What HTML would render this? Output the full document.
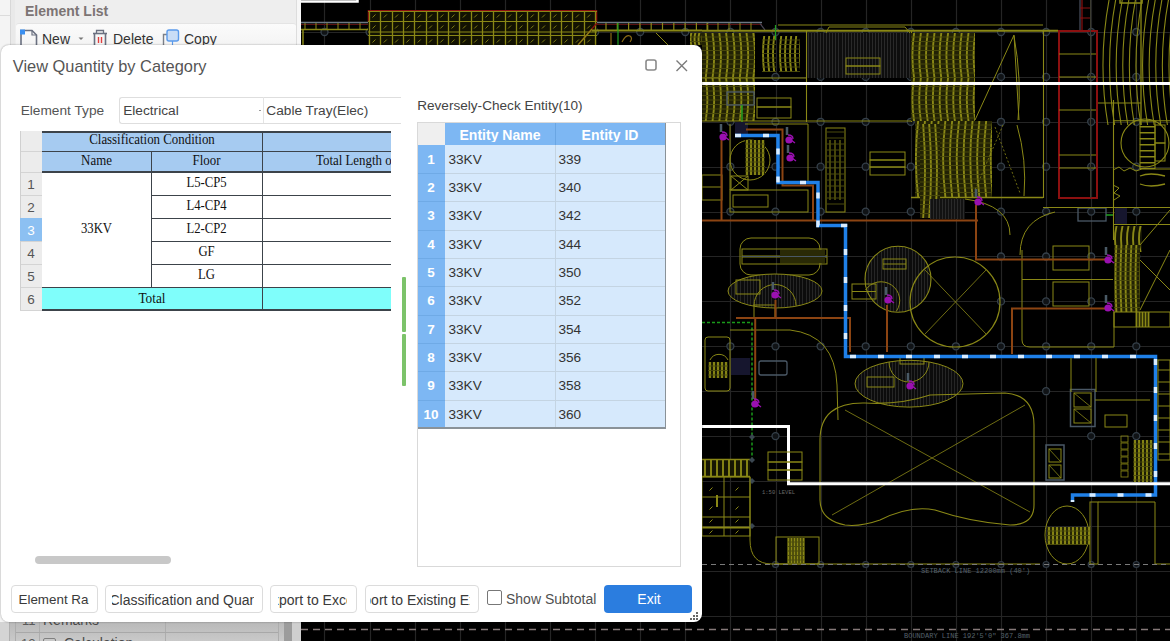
<!DOCTYPE html>
<html><head><meta charset="utf-8">
<style>
*{box-sizing:border-box;margin:0;padding:0}
html,body{width:1170px;height:641px;overflow:hidden;background:#000;font-family:"Liberation Sans",sans-serif}
.abs{position:absolute}
.t{position:absolute;white-space:nowrap}
</style></head><body>
<div class="abs" style="left:0px;top:0px;width:301px;height:641px;background:#e9e9e9"></div>
<div class="abs" style="left:0px;top:0px;width:11px;height:641px;background:#f4f4f4;border-right:1px solid #d8d8d8"></div>
<div class="abs" style="left:0px;top:15px;width:11px;height:1px;background:#dcdcdc"></div>
<div class="abs" style="left:15px;top:0px;width:282px;height:641px;background:#eeeeee;border-right:1px solid #dddddd"></div>
<div class="abs" style="left:16px;top:23px;width:280px;height:25px;background:linear-gradient(#fbfbfb,#f3f3f3);border-top:1px solid #e4e4e4;border-radius:3px 3px 0 0"></div>
<div class="t" style="left:25.0px;top:4.0px;font-size:14px;line-height:14px;color:#7c7474;font-weight:bold;font-family:'Liberation Sans',sans-serif;">Element List</div>
<svg class="abs" style="left:0;top:0" width="300" height="50" viewBox="0 0 300 50"><path d="M21 46 L21 30.5 L32 30.5 L36.5 35 L36.5 46" fill="none" stroke="#6a7080" stroke-width="1.6"/><path d="M32 30.5 L32 35 L36.5 35" fill="none" stroke="#6a7080" stroke-width="1.2"/><rect x="20" y="29.5" width="5" height="5" fill="#3b8ff0"/><path d="M78.5 37.5 L83.5 37.5 L81 40 Z" fill="#777"/><path d="M93 33.5 L107 33.5" stroke="#6a7080" stroke-width="1.6"/><path d="M96.5 33 L96.5 30.5 L103.5 30.5 L103.5 33" fill="none" stroke="#6a7080" stroke-width="1.3"/><path d="M94.5 34 L94.5 46 M105.5 34 L105.5 46" stroke="#6a7080" stroke-width="1.6"/><path d="M98.5 37 L98.5 43 M101.5 37 L101.5 43" stroke="#e04040" stroke-width="1.4"/><path d="M163.5 46 L163.5 34.5 L167 34.5" fill="none" stroke="#7a7f88" stroke-width="1.4"/><rect x="167" y="30" width="11.5" height="11" rx="2" fill="#c9ddf6" stroke="#5b9bec" stroke-width="1.4"/><path d="M172.5 41 L172.5 46" stroke="#5b9bec" stroke-width="1.2"/></svg>
<div class="t" style="left:42.0px;top:32.1px;font-size:14px;line-height:14px;color:#333;font-weight:normal;font-family:'Liberation Sans',sans-serif;">New</div>
<div class="t" style="left:113.0px;top:32.1px;font-size:14px;line-height:14px;color:#333;font-weight:normal;font-family:'Liberation Sans',sans-serif;">Delete</div>
<div class="t" style="left:184.0px;top:32.1px;font-size:14px;line-height:14px;color:#333;font-weight:normal;font-family:'Liberation Sans',sans-serif;">Copy</div>
<div class="abs" style="left:297px;top:0px;width:4px;height:641px;background:#f7f7f7"></div>
<div class="abs" style="left:0px;top:622px;width:301px;height:19px;background:linear-gradient(#b9b9b9,#c9c9c9)"></div>
<div class="abs" style="left:0px;top:622px;width:9px;height:19px;background:#d4d4d4"></div>
<div class="abs" style="left:9px;top:622px;width:1px;height:19px;background:#b0b0b0"></div>
<div class="abs" style="left:15px;top:622px;width:1px;height:19px;background:#adadad"></div>
<div class="abs" style="left:39px;top:622px;width:1px;height:19px;background:#adadad"></div>
<div class="abs" style="left:165px;top:622px;width:1px;height:19px;background:#adadad"></div>
<div class="abs" style="left:277.5px;top:622px;width:1.0px;height:19px;background:#adadad"></div>
<div class="abs" style="left:284px;top:622px;width:8px;height:19px;background:#9c9c9c"></div>
<div class="abs" style="left:292px;top:622px;width:9px;height:19px;background:#cfcfcf"></div>
<div class="abs" style="left:16px;top:631.5px;width:262px;height:1.0px;background:#a8a8a8"></div>
<div class="t" style="left:22.0px;top:614.0px;font-size:13px;line-height:13px;color:#5a5a5a;font-weight:normal;font-family:'Liberation Sans',sans-serif;">11</div>
<div class="t" style="left:43.0px;top:613.1px;font-size:14px;line-height:14px;color:#4a4a4a;font-weight:normal;font-family:'Liberation Sans',sans-serif;">Remarks</div>
<div class="t" style="left:21.0px;top:637.0px;font-size:13px;line-height:13px;color:#5a5a5a;font-weight:normal;font-family:'Liberation Sans',sans-serif;">12</div>
<div class="abs" style="left:43px;top:638px;width:13px;height:13px;border:1px solid #808080;border-radius:2px"></div>
<div class="t" style="left:64.0px;top:636.1px;font-size:14px;line-height:14px;color:#4a4a4a;font-weight:normal;font-family:'Liberation Sans',sans-serif;">Calculation</div>
<svg class="abs" style="left:301px;top:0" width="869" height="641" viewBox="301 0 869 641">
<rect x="301" y="0" width="869" height="641" fill="#000"/>
<line x1="324.5" y1="0" x2="324.5" y2="641" stroke="#252525" stroke-width="1.2" />
<line x1="370.5" y1="0" x2="370.5" y2="641" stroke="#252525" stroke-width="1.2" />
<line x1="415.5" y1="0" x2="415.5" y2="641" stroke="#252525" stroke-width="1.2" />
<line x1="460.5" y1="0" x2="460.5" y2="641" stroke="#252525" stroke-width="1.2" />
<line x1="505.5" y1="0" x2="505.5" y2="641" stroke="#252525" stroke-width="1.2" />
<line x1="550.5" y1="0" x2="550.5" y2="641" stroke="#252525" stroke-width="1.2" />
<line x1="595.5" y1="0" x2="595.5" y2="641" stroke="#252525" stroke-width="1.2" />
<line x1="640.5" y1="0" x2="640.5" y2="641" stroke="#252525" stroke-width="1.2" />
<line x1="685.5" y1="0" x2="685.5" y2="641" stroke="#252525" stroke-width="1.2" />
<line x1="730.5" y1="0" x2="730.5" y2="641" stroke="#252525" stroke-width="1.2" />
<line x1="776.5" y1="0" x2="776.5" y2="641" stroke="#252525" stroke-width="1.2" />
<line x1="821.5" y1="0" x2="821.5" y2="641" stroke="#252525" stroke-width="1.2" />
<line x1="866.5" y1="0" x2="866.5" y2="641" stroke="#252525" stroke-width="1.2" />
<line x1="911.5" y1="0" x2="911.5" y2="641" stroke="#252525" stroke-width="1.2" />
<line x1="956.5" y1="0" x2="956.5" y2="641" stroke="#252525" stroke-width="1.2" />
<line x1="1001.5" y1="0" x2="1001.5" y2="641" stroke="#252525" stroke-width="1.2" />
<line x1="1046.5" y1="0" x2="1046.5" y2="641" stroke="#252525" stroke-width="1.2" />
<line x1="1091.5" y1="0" x2="1091.5" y2="641" stroke="#252525" stroke-width="1.2" />
<line x1="1136.5" y1="0" x2="1136.5" y2="641" stroke="#252525" stroke-width="1.2" />
<line x1="301" y1="32.5" x2="1170" y2="32.5" stroke="#252525" stroke-width="1.2" />
<line x1="301" y1="77.5" x2="1170" y2="77.5" stroke="#252525" stroke-width="1.2" />
<line x1="301" y1="122.5" x2="1170" y2="122.5" stroke="#252525" stroke-width="1.2" />
<line x1="301" y1="167.5" x2="1170" y2="167.5" stroke="#252525" stroke-width="1.2" />
<line x1="301" y1="212.5" x2="1170" y2="212.5" stroke="#252525" stroke-width="1.2" />
<line x1="301" y1="256.5" x2="1170" y2="256.5" stroke="#252525" stroke-width="1.2" />
<line x1="301" y1="301.5" x2="1170" y2="301.5" stroke="#252525" stroke-width="1.2" />
<line x1="301" y1="346.5" x2="1170" y2="346.5" stroke="#252525" stroke-width="1.2" />
<line x1="301" y1="391.5" x2="1170" y2="391.5" stroke="#252525" stroke-width="1.2" />
<line x1="301" y1="436.5" x2="1170" y2="436.5" stroke="#252525" stroke-width="1.2" />
<line x1="301" y1="481.5" x2="1170" y2="481.5" stroke="#252525" stroke-width="1.2" />
<line x1="301" y1="526.5" x2="1170" y2="526.5" stroke="#252525" stroke-width="1.2" />
<line x1="301" y1="571.5" x2="1170" y2="571.5" stroke="#252525" stroke-width="1.2" />
<line x1="301" y1="616.5" x2="1170" y2="616.5" stroke="#252525" stroke-width="1.2" />
<circle cx="324.5" cy="32.0" r="3.5" stroke="#35404a" stroke-width="1.3" fill="#101316" />
<circle cx="369.6" cy="32.0" r="3.5" stroke="#35404a" stroke-width="1.3" fill="#101316" />
<circle cx="414.7" cy="32.0" r="3.5" stroke="#35404a" stroke-width="1.3" fill="#101316" />
<circle cx="459.8" cy="32.0" r="3.5" stroke="#35404a" stroke-width="1.3" fill="#101316" />
<circle cx="504.9" cy="32.0" r="3.5" stroke="#35404a" stroke-width="1.3" fill="#101316" />
<circle cx="550.0" cy="32.0" r="3.5" stroke="#35404a" stroke-width="1.3" fill="#101316" />
<circle cx="595.1" cy="32.0" r="3.5" stroke="#35404a" stroke-width="1.3" fill="#101316" />
<circle cx="640.2" cy="32.0" r="3.5" stroke="#35404a" stroke-width="1.3" fill="#101316" />
<circle cx="685.3" cy="32.0" r="3.5" stroke="#35404a" stroke-width="1.3" fill="#101316" />
<circle cx="730.4" cy="32.0" r="3.5" stroke="#35404a" stroke-width="1.3" fill="#101316" />
<circle cx="730.4" cy="76.9" r="3.5" stroke="#35404a" stroke-width="1.3" fill="#101316" />
<circle cx="730.4" cy="121.8" r="3.5" stroke="#35404a" stroke-width="1.3" fill="#101316" />
<circle cx="730.4" cy="166.7" r="3.5" stroke="#35404a" stroke-width="1.3" fill="#101316" />
<circle cx="730.4" cy="211.6" r="3.5" stroke="#35404a" stroke-width="1.3" fill="#101316" />
<circle cx="730.4" cy="346.3" r="3.5" stroke="#35404a" stroke-width="1.3" fill="#101316" />
<circle cx="775.5" cy="32.0" r="3.5" stroke="#35404a" stroke-width="1.3" fill="#101316" />
<circle cx="775.5" cy="76.9" r="3.5" stroke="#35404a" stroke-width="1.3" fill="#101316" />
<circle cx="775.5" cy="121.8" r="3.5" stroke="#35404a" stroke-width="1.3" fill="#101316" />
<circle cx="775.5" cy="166.7" r="3.5" stroke="#35404a" stroke-width="1.3" fill="#101316" />
<circle cx="775.5" cy="211.6" r="3.5" stroke="#35404a" stroke-width="1.3" fill="#101316" />
<circle cx="775.5" cy="346.3" r="3.5" stroke="#35404a" stroke-width="1.3" fill="#101316" />
<circle cx="775.5" cy="436.1" r="3.5" stroke="#35404a" stroke-width="1.3" fill="#101316" />
<circle cx="820.6" cy="32.0" r="3.5" stroke="#35404a" stroke-width="1.3" fill="#101316" />
<circle cx="820.6" cy="76.9" r="3.5" stroke="#35404a" stroke-width="1.3" fill="#101316" />
<circle cx="820.6" cy="121.8" r="3.5" stroke="#35404a" stroke-width="1.3" fill="#101316" />
<circle cx="820.6" cy="166.7" r="3.5" stroke="#35404a" stroke-width="1.3" fill="#101316" />
<circle cx="820.6" cy="211.6" r="3.5" stroke="#35404a" stroke-width="1.3" fill="#101316" />
<circle cx="820.6" cy="346.3" r="3.5" stroke="#35404a" stroke-width="1.3" fill="#101316" />
<circle cx="865.7" cy="32.0" r="3.5" stroke="#35404a" stroke-width="1.3" fill="#101316" />
<circle cx="865.7" cy="76.9" r="3.5" stroke="#35404a" stroke-width="1.3" fill="#101316" />
<circle cx="865.7" cy="121.8" r="3.5" stroke="#35404a" stroke-width="1.3" fill="#101316" />
<circle cx="865.7" cy="166.7" r="3.5" stroke="#35404a" stroke-width="1.3" fill="#101316" />
<circle cx="865.7" cy="211.6" r="3.5" stroke="#35404a" stroke-width="1.3" fill="#101316" />
<circle cx="865.7" cy="346.3" r="3.5" stroke="#35404a" stroke-width="1.3" fill="#101316" />
<circle cx="910.8" cy="32.0" r="3.5" stroke="#35404a" stroke-width="1.3" fill="#101316" />
<circle cx="910.8" cy="76.9" r="3.5" stroke="#35404a" stroke-width="1.3" fill="#101316" />
<circle cx="910.8" cy="121.8" r="3.5" stroke="#35404a" stroke-width="1.3" fill="#101316" />
<circle cx="910.8" cy="166.7" r="3.5" stroke="#35404a" stroke-width="1.3" fill="#101316" />
<circle cx="910.8" cy="211.6" r="3.5" stroke="#35404a" stroke-width="1.3" fill="#101316" />
<circle cx="910.8" cy="346.3" r="3.5" stroke="#35404a" stroke-width="1.3" fill="#101316" />
<circle cx="955.9" cy="32.0" r="3.5" stroke="#35404a" stroke-width="1.3" fill="#101316" />
<circle cx="955.9" cy="76.9" r="3.5" stroke="#35404a" stroke-width="1.3" fill="#101316" />
<circle cx="955.9" cy="121.8" r="3.5" stroke="#35404a" stroke-width="1.3" fill="#101316" />
<circle cx="955.9" cy="166.7" r="3.5" stroke="#35404a" stroke-width="1.3" fill="#101316" />
<circle cx="955.9" cy="211.6" r="3.5" stroke="#35404a" stroke-width="1.3" fill="#101316" />
<circle cx="955.9" cy="346.3" r="3.5" stroke="#35404a" stroke-width="1.3" fill="#101316" />
<circle cx="1001.0" cy="32.0" r="3.5" stroke="#35404a" stroke-width="1.3" fill="#101316" />
<circle cx="1001.0" cy="76.9" r="3.5" stroke="#35404a" stroke-width="1.3" fill="#101316" />
<circle cx="1001.0" cy="121.8" r="3.5" stroke="#35404a" stroke-width="1.3" fill="#101316" />
<circle cx="1001.0" cy="166.7" r="3.5" stroke="#35404a" stroke-width="1.3" fill="#101316" />
<circle cx="1001.0" cy="211.6" r="3.5" stroke="#35404a" stroke-width="1.3" fill="#101316" />
<circle cx="1001.0" cy="256.5" r="3.5" stroke="#35404a" stroke-width="1.3" fill="#101316" />
<circle cx="1001.0" cy="301.4" r="3.5" stroke="#35404a" stroke-width="1.3" fill="#101316" />
<circle cx="1001.0" cy="346.3" r="3.5" stroke="#35404a" stroke-width="1.3" fill="#101316" />
<circle cx="1046.1" cy="32.0" r="3.5" stroke="#35404a" stroke-width="1.3" fill="#101316" />
<circle cx="1046.1" cy="76.9" r="3.5" stroke="#35404a" stroke-width="1.3" fill="#101316" />
<circle cx="1046.1" cy="121.8" r="3.5" stroke="#35404a" stroke-width="1.3" fill="#101316" />
<circle cx="1046.1" cy="166.7" r="3.5" stroke="#35404a" stroke-width="1.3" fill="#101316" />
<circle cx="1046.1" cy="211.6" r="3.5" stroke="#35404a" stroke-width="1.3" fill="#101316" />
<circle cx="1046.1" cy="256.5" r="3.5" stroke="#35404a" stroke-width="1.3" fill="#101316" />
<circle cx="1046.1" cy="301.4" r="3.5" stroke="#35404a" stroke-width="1.3" fill="#101316" />
<circle cx="1046.1" cy="346.3" r="3.5" stroke="#35404a" stroke-width="1.3" fill="#101316" />
<circle cx="1046.1" cy="391.2" r="3.5" stroke="#35404a" stroke-width="1.3" fill="#101316" />
<circle cx="1091.2" cy="32.0" r="3.5" stroke="#35404a" stroke-width="1.3" fill="#101316" />
<circle cx="1091.2" cy="76.9" r="3.5" stroke="#35404a" stroke-width="1.3" fill="#101316" />
<circle cx="1091.2" cy="121.8" r="3.5" stroke="#35404a" stroke-width="1.3" fill="#101316" />
<circle cx="1091.2" cy="166.7" r="3.5" stroke="#35404a" stroke-width="1.3" fill="#101316" />
<circle cx="1091.2" cy="211.6" r="3.5" stroke="#35404a" stroke-width="1.3" fill="#101316" />
<circle cx="1091.2" cy="256.5" r="3.5" stroke="#35404a" stroke-width="1.3" fill="#101316" />
<circle cx="1091.2" cy="301.4" r="3.5" stroke="#35404a" stroke-width="1.3" fill="#101316" />
<circle cx="1091.2" cy="346.3" r="3.5" stroke="#35404a" stroke-width="1.3" fill="#101316" />
<circle cx="1091.2" cy="436.1" r="3.5" stroke="#35404a" stroke-width="1.3" fill="#101316" />
<circle cx="1136.3" cy="32.0" r="3.5" stroke="#35404a" stroke-width="1.3" fill="#101316" />
<circle cx="1136.3" cy="76.9" r="3.5" stroke="#35404a" stroke-width="1.3" fill="#101316" />
<circle cx="1136.3" cy="121.8" r="3.5" stroke="#35404a" stroke-width="1.3" fill="#101316" />
<circle cx="1136.3" cy="166.7" r="3.5" stroke="#35404a" stroke-width="1.3" fill="#101316" />
<circle cx="1136.3" cy="211.6" r="3.5" stroke="#35404a" stroke-width="1.3" fill="#101316" />
<circle cx="1136.3" cy="256.5" r="3.5" stroke="#35404a" stroke-width="1.3" fill="#101316" />
<circle cx="1136.3" cy="301.4" r="3.5" stroke="#35404a" stroke-width="1.3" fill="#101316" />
<circle cx="1136.3" cy="346.3" r="3.5" stroke="#35404a" stroke-width="1.3" fill="#101316" />
<circle cx="1136.3" cy="436.1" r="3.5" stroke="#35404a" stroke-width="1.3" fill="#101316" />
<circle cx="775.5" cy="564.5" r="3" stroke="#323c46" stroke-width="1.2" fill="#111418" />
<circle cx="820.6" cy="564.5" r="3" stroke="#323c46" stroke-width="1.2" fill="#111418" />
<circle cx="865.7" cy="564.5" r="3" stroke="#323c46" stroke-width="1.2" fill="#111418" />
<circle cx="910.8" cy="564.5" r="3" stroke="#323c46" stroke-width="1.2" fill="#111418" />
<circle cx="955.9" cy="564.5" r="3" stroke="#323c46" stroke-width="1.2" fill="#111418" />
<circle cx="1001.0" cy="564.5" r="3" stroke="#323c46" stroke-width="1.2" fill="#111418" />
<circle cx="1046.1" cy="564.5" r="3" stroke="#323c46" stroke-width="1.2" fill="#111418" />
<circle cx="1091.2" cy="564.5" r="3" stroke="#323c46" stroke-width="1.2" fill="#111418" />
<circle cx="1136.3" cy="564.5" r="3" stroke="#323c46" stroke-width="1.2" fill="#111418" />
<path d="M301 1.5 L357.5 1.5 L357.5 -2" stroke="#ffffff" stroke-width="2.5" fill="none" />
<line x1="301" y1="22.5" x2="378" y2="22.5" stroke="#6c7884" stroke-width="1.6" />
<line x1="301" y1="24.5" x2="378" y2="24.5" stroke="#5a1010" stroke-width="1" />
<line x1="301" y1="29.5" x2="378" y2="29.5" stroke="#8a8816" stroke-width="1.5" />
<line x1="305" y1="23" x2="305" y2="30" stroke="#8a8816" stroke-width="1" />
<line x1="316" y1="23" x2="316" y2="30" stroke="#8a8816" stroke-width="1" />
<line x1="327" y1="23" x2="327" y2="30" stroke="#8a8816" stroke-width="1" />
<line x1="338" y1="23" x2="338" y2="30" stroke="#8a8816" stroke-width="1" />
<line x1="349" y1="23" x2="349" y2="30" stroke="#8a8816" stroke-width="1" />
<line x1="360" y1="23" x2="360" y2="30" stroke="#8a8816" stroke-width="1" />
<line x1="371" y1="23" x2="371" y2="30" stroke="#8a8816" stroke-width="1" />
<path d="M378 23.5 L392 45" stroke="#8c1010" stroke-width="1.5" fill="none" />
<path d="M376 29.5 L388 45" stroke="#8a8816" stroke-width="1.2" fill="none" />
<line x1="303" y1="29" x2="303" y2="45" stroke="#8a8816" stroke-width="1.5" />
<rect x="368" y="10" width="229" height="36" fill="#121202"/>
<line x1="368" y1="10.5" x2="597" y2="10.5" stroke="#8c1010" stroke-width="1" />
<line x1="368.5" y1="10" x2="368.5" y2="22" stroke="#8c1010" stroke-width="1.5" />
<line x1="596.5" y1="10" x2="596.5" y2="22" stroke="#8c1010" stroke-width="1.5" />
<line x1="369.5" y1="11" x2="369.5" y2="45" stroke="#8a8816" stroke-width="1.3" />
<line x1="380.5" y1="11" x2="380.5" y2="45" stroke="#8a8816" stroke-width="1.3" />
<line x1="392.5" y1="11" x2="392.5" y2="45" stroke="#8a8816" stroke-width="1.3" />
<line x1="403.5" y1="11" x2="403.5" y2="45" stroke="#8a8816" stroke-width="1.3" />
<line x1="414.5" y1="11" x2="414.5" y2="45" stroke="#8a8816" stroke-width="1.3" />
<line x1="426.5" y1="11" x2="426.5" y2="45" stroke="#8a8816" stroke-width="1.3" />
<line x1="437.5" y1="11" x2="437.5" y2="45" stroke="#8a8816" stroke-width="1.3" />
<line x1="448.5" y1="11" x2="448.5" y2="45" stroke="#8a8816" stroke-width="1.3" />
<line x1="459.5" y1="11" x2="459.5" y2="45" stroke="#8a8816" stroke-width="1.3" />
<line x1="471.5" y1="11" x2="471.5" y2="45" stroke="#8a8816" stroke-width="1.3" />
<line x1="482.5" y1="11" x2="482.5" y2="45" stroke="#8a8816" stroke-width="1.3" />
<line x1="493.5" y1="11" x2="493.5" y2="45" stroke="#8a8816" stroke-width="1.3" />
<line x1="505.5" y1="11" x2="505.5" y2="45" stroke="#8a8816" stroke-width="1.3" />
<line x1="516.5" y1="11" x2="516.5" y2="45" stroke="#8a8816" stroke-width="1.3" />
<line x1="527.5" y1="11" x2="527.5" y2="45" stroke="#8a8816" stroke-width="1.3" />
<line x1="538.5" y1="11" x2="538.5" y2="45" stroke="#8a8816" stroke-width="1.3" />
<line x1="550.5" y1="11" x2="550.5" y2="45" stroke="#8a8816" stroke-width="1.3" />
<line x1="561.5" y1="11" x2="561.5" y2="45" stroke="#8a8816" stroke-width="1.3" />
<line x1="572.5" y1="11" x2="572.5" y2="45" stroke="#8a8816" stroke-width="1.3" />
<line x1="584.5" y1="11" x2="584.5" y2="45" stroke="#8a8816" stroke-width="1.3" />
<line x1="595.5" y1="11" x2="595.5" y2="45" stroke="#8a8816" stroke-width="1.3" />
<line x1="368" y1="11.5" x2="597" y2="11.5" stroke="#8a8816" stroke-width="1.1" />
<line x1="368" y1="21.5" x2="597" y2="21.5" stroke="#8a8816" stroke-width="1.1" />
<line x1="368" y1="32" x2="597" y2="32" stroke="#8a8816" stroke-width="1.1" />
<line x1="368" y1="35.5" x2="597" y2="35.5" stroke="#8a8816" stroke-width="1.1" />
<line x1="372.5" y1="17.5" x2="375.5" y2="14.5" stroke="#8a8816" stroke-width="0.9" />
<line x1="372.5" y1="28.5" x2="375.5" y2="25.5" stroke="#8a8816" stroke-width="0.9" />
<line x1="372.5" y1="42.5" x2="375.5" y2="39.5" stroke="#8a8816" stroke-width="0.9" />
<line x1="383.8" y1="17.5" x2="386.8" y2="14.5" stroke="#8a8816" stroke-width="0.9" />
<line x1="383.8" y1="28.5" x2="386.8" y2="25.5" stroke="#8a8816" stroke-width="0.9" />
<line x1="383.8" y1="42.5" x2="386.8" y2="39.5" stroke="#8a8816" stroke-width="0.9" />
<line x1="395.1" y1="17.5" x2="398.1" y2="14.5" stroke="#8a8816" stroke-width="0.9" />
<line x1="395.1" y1="28.5" x2="398.1" y2="25.5" stroke="#8a8816" stroke-width="0.9" />
<line x1="395.1" y1="42.5" x2="398.1" y2="39.5" stroke="#8a8816" stroke-width="0.9" />
<line x1="406.4" y1="17.5" x2="409.4" y2="14.5" stroke="#8a8816" stroke-width="0.9" />
<line x1="406.4" y1="28.5" x2="409.4" y2="25.5" stroke="#8a8816" stroke-width="0.9" />
<line x1="406.4" y1="42.5" x2="409.4" y2="39.5" stroke="#8a8816" stroke-width="0.9" />
<line x1="417.7" y1="17.5" x2="420.7" y2="14.5" stroke="#8a8816" stroke-width="0.9" />
<line x1="417.7" y1="28.5" x2="420.7" y2="25.5" stroke="#8a8816" stroke-width="0.9" />
<line x1="417.7" y1="42.5" x2="420.7" y2="39.5" stroke="#8a8816" stroke-width="0.9" />
<line x1="429.0" y1="17.5" x2="432.0" y2="14.5" stroke="#8a8816" stroke-width="0.9" />
<line x1="429.0" y1="28.5" x2="432.0" y2="25.5" stroke="#8a8816" stroke-width="0.9" />
<line x1="429.0" y1="42.5" x2="432.0" y2="39.5" stroke="#8a8816" stroke-width="0.9" />
<line x1="440.3" y1="17.5" x2="443.3" y2="14.5" stroke="#8a8816" stroke-width="0.9" />
<line x1="440.3" y1="28.5" x2="443.3" y2="25.5" stroke="#8a8816" stroke-width="0.9" />
<line x1="440.3" y1="42.5" x2="443.3" y2="39.5" stroke="#8a8816" stroke-width="0.9" />
<line x1="451.6" y1="17.5" x2="454.6" y2="14.5" stroke="#8a8816" stroke-width="0.9" />
<line x1="451.6" y1="28.5" x2="454.6" y2="25.5" stroke="#8a8816" stroke-width="0.9" />
<line x1="451.6" y1="42.5" x2="454.6" y2="39.5" stroke="#8a8816" stroke-width="0.9" />
<line x1="462.9" y1="17.5" x2="465.9" y2="14.5" stroke="#8a8816" stroke-width="0.9" />
<line x1="462.9" y1="28.5" x2="465.9" y2="25.5" stroke="#8a8816" stroke-width="0.9" />
<line x1="462.9" y1="42.5" x2="465.9" y2="39.5" stroke="#8a8816" stroke-width="0.9" />
<line x1="474.2" y1="17.5" x2="477.2" y2="14.5" stroke="#8a8816" stroke-width="0.9" />
<line x1="474.2" y1="28.5" x2="477.2" y2="25.5" stroke="#8a8816" stroke-width="0.9" />
<line x1="474.2" y1="42.5" x2="477.2" y2="39.5" stroke="#8a8816" stroke-width="0.9" />
<line x1="485.5" y1="17.5" x2="488.5" y2="14.5" stroke="#8a8816" stroke-width="0.9" />
<line x1="485.5" y1="28.5" x2="488.5" y2="25.5" stroke="#8a8816" stroke-width="0.9" />
<line x1="485.5" y1="42.5" x2="488.5" y2="39.5" stroke="#8a8816" stroke-width="0.9" />
<line x1="496.8" y1="17.5" x2="499.8" y2="14.5" stroke="#8a8816" stroke-width="0.9" />
<line x1="496.8" y1="28.5" x2="499.8" y2="25.5" stroke="#8a8816" stroke-width="0.9" />
<line x1="496.8" y1="42.5" x2="499.8" y2="39.5" stroke="#8a8816" stroke-width="0.9" />
<line x1="508.1" y1="17.5" x2="511.1" y2="14.5" stroke="#8a8816" stroke-width="0.9" />
<line x1="508.1" y1="28.5" x2="511.1" y2="25.5" stroke="#8a8816" stroke-width="0.9" />
<line x1="508.1" y1="42.5" x2="511.1" y2="39.5" stroke="#8a8816" stroke-width="0.9" />
<line x1="519.4" y1="17.5" x2="522.4" y2="14.5" stroke="#8a8816" stroke-width="0.9" />
<line x1="519.4" y1="28.5" x2="522.4" y2="25.5" stroke="#8a8816" stroke-width="0.9" />
<line x1="519.4" y1="42.5" x2="522.4" y2="39.5" stroke="#8a8816" stroke-width="0.9" />
<line x1="530.7" y1="17.5" x2="533.7" y2="14.5" stroke="#8a8816" stroke-width="0.9" />
<line x1="530.7" y1="28.5" x2="533.7" y2="25.5" stroke="#8a8816" stroke-width="0.9" />
<line x1="530.7" y1="42.5" x2="533.7" y2="39.5" stroke="#8a8816" stroke-width="0.9" />
<line x1="542.0" y1="17.5" x2="545.0" y2="14.5" stroke="#8a8816" stroke-width="0.9" />
<line x1="542.0" y1="28.5" x2="545.0" y2="25.5" stroke="#8a8816" stroke-width="0.9" />
<line x1="542.0" y1="42.5" x2="545.0" y2="39.5" stroke="#8a8816" stroke-width="0.9" />
<line x1="553.3" y1="17.5" x2="556.3" y2="14.5" stroke="#8a8816" stroke-width="0.9" />
<line x1="553.3" y1="28.5" x2="556.3" y2="25.5" stroke="#8a8816" stroke-width="0.9" />
<line x1="553.3" y1="42.5" x2="556.3" y2="39.5" stroke="#8a8816" stroke-width="0.9" />
<line x1="564.6" y1="17.5" x2="567.6" y2="14.5" stroke="#8a8816" stroke-width="0.9" />
<line x1="564.6" y1="28.5" x2="567.6" y2="25.5" stroke="#8a8816" stroke-width="0.9" />
<line x1="564.6" y1="42.5" x2="567.6" y2="39.5" stroke="#8a8816" stroke-width="0.9" />
<line x1="575.9" y1="17.5" x2="578.9" y2="14.5" stroke="#8a8816" stroke-width="0.9" />
<line x1="575.9" y1="28.5" x2="578.9" y2="25.5" stroke="#8a8816" stroke-width="0.9" />
<line x1="575.9" y1="42.5" x2="578.9" y2="39.5" stroke="#8a8816" stroke-width="0.9" />
<line x1="587.2" y1="17.5" x2="590.2" y2="14.5" stroke="#8a8816" stroke-width="0.9" />
<line x1="587.2" y1="28.5" x2="590.2" y2="25.5" stroke="#8a8816" stroke-width="0.9" />
<line x1="587.2" y1="42.5" x2="590.2" y2="39.5" stroke="#8a8816" stroke-width="0.9" />
<line x1="597" y1="22.5" x2="702" y2="22.5" stroke="#6c7884" stroke-width="1.6" />
<line x1="597" y1="24.5" x2="702" y2="24.5" stroke="#5a1010" stroke-width="1" />
<line x1="592" y1="30.5" x2="702" y2="30.5" stroke="#8a8816" stroke-width="2.2" />
<line x1="606.0" y1="23" x2="606.0" y2="31" stroke="#8a8816" stroke-width="1.2" />
<line x1="617.3" y1="23" x2="617.3" y2="31" stroke="#8a8816" stroke-width="1.2" />
<line x1="628.6" y1="23" x2="628.6" y2="31" stroke="#8a8816" stroke-width="1.2" />
<line x1="639.9" y1="23" x2="639.9" y2="31" stroke="#8a8816" stroke-width="1.2" />
<line x1="651.2" y1="23" x2="651.2" y2="31" stroke="#8a8816" stroke-width="1.2" />
<line x1="662.5" y1="23" x2="662.5" y2="31" stroke="#8a8816" stroke-width="1.2" />
<line x1="673.8" y1="23" x2="673.8" y2="31" stroke="#8a8816" stroke-width="1.2" />
<line x1="685.1" y1="23" x2="685.1" y2="31" stroke="#8a8816" stroke-width="1.2" />
<line x1="696.4" y1="23" x2="696.4" y2="31" stroke="#8a8816" stroke-width="1.2" />
<line x1="707.7" y1="23" x2="707.7" y2="31" stroke="#8a8816" stroke-width="1.2" />
<path d="M597 23 L578 45" stroke="#8c1010" stroke-width="1.2" fill="none" />
<path d="M592 29 L578 45" stroke="#8a8816" stroke-width="1.2" fill="none" />
<line x1="618" y1="23" x2="618" y2="45" stroke="#20a020" stroke-width="1.2" />
<path d="M622 42 q4 -8 8 -6 q3 2 0 6 M611 33 L611 45" stroke="#8a6a16" stroke-width="1.2" fill="none" />
<path d="M656 33 L668 45" stroke="#8a8816" stroke-width="1" fill="none" />
<clipPath id="c1"><rect x="690" y="33" width="12" height="12"/></clipPath><g clip-path="url(#c1)">
<rect x="690" y="33" width="12" height="12" fill="#222205"/>
<path d="M692.0 31 Q689.0 39.0 692.0 47" stroke="#8a8816" stroke-width="1.9" fill="none" />
<path d="M696.0 31 Q693.0 39.0 696.0 47" stroke="#8a8816" stroke-width="1.9" fill="none" />
<path d="M700.0 31 Q697.0 39.0 700.0 47" stroke="#8a8816" stroke-width="1.9" fill="none" />
<path d="M704.0 31 Q701.0 39.0 704.0 47" stroke="#8a8816" stroke-width="1.9" fill="none" />
<line x1="690" y1="37" x2="702" y2="37" stroke="#4c4c0c" stroke-width="0.9" />
<line x1="690" y1="41.5" x2="702" y2="41.5" stroke="#4c4c0c" stroke-width="0.9" />
</g>
<line x1="702" y1="22.5" x2="762" y2="22.5" stroke="#6c7884" stroke-width="1.6" />
<line x1="702" y1="24.5" x2="762" y2="24.5" stroke="#5a1010" stroke-width="1" />
<line x1="707" y1="23" x2="707" y2="30" stroke="#8a8816" stroke-width="1" />
<line x1="718" y1="23" x2="718" y2="30" stroke="#8a8816" stroke-width="1" />
<line x1="729" y1="23" x2="729" y2="30" stroke="#8a8816" stroke-width="1" />
<line x1="740" y1="23" x2="740" y2="30" stroke="#8a8816" stroke-width="1" />
<line x1="751" y1="23" x2="751" y2="30" stroke="#8a8816" stroke-width="1" />
<path d="M760 23.5 L765 30" stroke="#4a4858" stroke-width="1.2" fill="none" />
<line x1="702" y1="30.8" x2="1058" y2="30.8" stroke="#8a8816" stroke-width="2" />
<line x1="778" y1="25" x2="1043" y2="25" stroke="#8a8816" stroke-width="1" />
<clipPath id="c2"><rect x="702" y="33" width="53" height="45"/></clipPath><g clip-path="url(#c2)">
<rect x="702" y="33" width="53" height="45" fill="#222205"/>
<path d="M705.4 31 Q709.4 55.5 705.4 80" stroke="#8a8816" stroke-width="1.9" fill="none" />
<path d="M712.2 31 Q716.2 55.5 712.2 80" stroke="#8a8816" stroke-width="1.9" fill="none" />
<path d="M719.0 31 Q723.0 55.5 719.0 80" stroke="#8a8816" stroke-width="1.9" fill="none" />
<path d="M725.8 31 Q729.8 55.5 725.8 80" stroke="#8a8816" stroke-width="1.9" fill="none" />
<path d="M732.6 31 Q736.6 55.5 732.6 80" stroke="#8a8816" stroke-width="1.9" fill="none" />
<path d="M739.4 31 Q743.4 55.5 739.4 80" stroke="#8a8816" stroke-width="1.9" fill="none" />
<path d="M746.2 31 Q750.2 55.5 746.2 80" stroke="#8a8816" stroke-width="1.9" fill="none" />
<path d="M753.0 31 Q757.0 55.5 753.0 80" stroke="#8a8816" stroke-width="1.9" fill="none" />
<path d="M759.8 31 Q763.8 55.5 759.8 80" stroke="#8a8816" stroke-width="1.9" fill="none" />
<line x1="702" y1="37" x2="755" y2="37" stroke="#4c4c0c" stroke-width="0.9" />
<line x1="702" y1="41.5" x2="755" y2="41.5" stroke="#4c4c0c" stroke-width="0.9" />
<line x1="702" y1="46.0" x2="755" y2="46.0" stroke="#4c4c0c" stroke-width="0.9" />
<line x1="702" y1="50.5" x2="755" y2="50.5" stroke="#4c4c0c" stroke-width="0.9" />
<line x1="702" y1="55.0" x2="755" y2="55.0" stroke="#4c4c0c" stroke-width="0.9" />
<line x1="702" y1="59.5" x2="755" y2="59.5" stroke="#4c4c0c" stroke-width="0.9" />
<line x1="702" y1="64.0" x2="755" y2="64.0" stroke="#4c4c0c" stroke-width="0.9" />
<line x1="702" y1="68.5" x2="755" y2="68.5" stroke="#4c4c0c" stroke-width="0.9" />
<line x1="702" y1="73.0" x2="755" y2="73.0" stroke="#4c4c0c" stroke-width="0.9" />
<line x1="702" y1="77.5" x2="755" y2="77.5" stroke="#4c4c0c" stroke-width="0.9" />
</g>
<clipPath id="c3"><rect x="702" y="78" width="53" height="43"/></clipPath><g clip-path="url(#c3)">
<rect x="702" y="78" width="53" height="43" fill="#222205"/>
<path d="M705.4 76 Q709.4 99.5 705.4 123" stroke="#8a8816" stroke-width="1.9" fill="none" />
<path d="M712.2 76 Q716.2 99.5 712.2 123" stroke="#8a8816" stroke-width="1.9" fill="none" />
<path d="M719.0 76 Q723.0 99.5 719.0 123" stroke="#8a8816" stroke-width="1.9" fill="none" />
<path d="M725.8 76 Q729.8 99.5 725.8 123" stroke="#8a8816" stroke-width="1.9" fill="none" />
<path d="M732.6 76 Q736.6 99.5 732.6 123" stroke="#8a8816" stroke-width="1.9" fill="none" />
<path d="M739.4 76 Q743.4 99.5 739.4 123" stroke="#8a8816" stroke-width="1.9" fill="none" />
<path d="M746.2 76 Q750.2 99.5 746.2 123" stroke="#8a8816" stroke-width="1.9" fill="none" />
<path d="M753.0 76 Q757.0 99.5 753.0 123" stroke="#8a8816" stroke-width="1.9" fill="none" />
<path d="M759.8 76 Q763.8 99.5 759.8 123" stroke="#8a8816" stroke-width="1.9" fill="none" />
<line x1="702" y1="82" x2="755" y2="82" stroke="#4c4c0c" stroke-width="0.9" />
<line x1="702" y1="86.5" x2="755" y2="86.5" stroke="#4c4c0c" stroke-width="0.9" />
<line x1="702" y1="91.0" x2="755" y2="91.0" stroke="#4c4c0c" stroke-width="0.9" />
<line x1="702" y1="95.5" x2="755" y2="95.5" stroke="#4c4c0c" stroke-width="0.9" />
<line x1="702" y1="100.0" x2="755" y2="100.0" stroke="#4c4c0c" stroke-width="0.9" />
<line x1="702" y1="104.5" x2="755" y2="104.5" stroke="#4c4c0c" stroke-width="0.9" />
<line x1="702" y1="109.0" x2="755" y2="109.0" stroke="#4c4c0c" stroke-width="0.9" />
<line x1="702" y1="113.5" x2="755" y2="113.5" stroke="#4c4c0c" stroke-width="0.9" />
<line x1="702" y1="118.0" x2="755" y2="118.0" stroke="#4c4c0c" stroke-width="0.9" />
</g>
<clipPath id="c4"><rect x="762" y="36" width="14" height="36"/></clipPath><g clip-path="url(#c4)">
<path d="M764.5 34 Q761.5 54.0 764.5 74" stroke="#8a8816" stroke-width="1.9" fill="none" />
<path d="M769.5 34 Q766.5 54.0 769.5 74" stroke="#8a8816" stroke-width="1.9" fill="none" />
<path d="M774.5 34 Q771.5 54.0 774.5 74" stroke="#8a8816" stroke-width="1.9" fill="none" />
<path d="M779.5 34 Q776.5 54.0 779.5 74" stroke="#8a8816" stroke-width="1.9" fill="none" />
<line x1="762" y1="40" x2="776" y2="40" stroke="#4c4c0c" stroke-width="0.9" />
<line x1="762" y1="44.5" x2="776" y2="44.5" stroke="#4c4c0c" stroke-width="0.9" />
<line x1="762" y1="49.0" x2="776" y2="49.0" stroke="#4c4c0c" stroke-width="0.9" />
<line x1="762" y1="53.5" x2="776" y2="53.5" stroke="#4c4c0c" stroke-width="0.9" />
<line x1="762" y1="58.0" x2="776" y2="58.0" stroke="#4c4c0c" stroke-width="0.9" />
<line x1="762" y1="62.5" x2="776" y2="62.5" stroke="#4c4c0c" stroke-width="0.9" />
<line x1="762" y1="67.0" x2="776" y2="67.0" stroke="#4c4c0c" stroke-width="0.9" />
<line x1="762" y1="71.5" x2="776" y2="71.5" stroke="#4c4c0c" stroke-width="0.9" />
</g>
<clipPath id="c5"><rect x="779" y="36" width="21" height="36"/></clipPath><g clip-path="url(#c5)">
<path d="M781.5 34 Q778.5 54.0 781.5 74" stroke="#8a8816" stroke-width="1.9" fill="none" />
<path d="M786.5 34 Q783.5 54.0 786.5 74" stroke="#8a8816" stroke-width="1.9" fill="none" />
<path d="M791.5 34 Q788.5 54.0 791.5 74" stroke="#8a8816" stroke-width="1.9" fill="none" />
<path d="M796.5 34 Q793.5 54.0 796.5 74" stroke="#8a8816" stroke-width="1.9" fill="none" />
<path d="M801.5 34 Q798.5 54.0 801.5 74" stroke="#8a8816" stroke-width="1.9" fill="none" />
<line x1="779" y1="40" x2="800" y2="40" stroke="#4c4c0c" stroke-width="0.9" />
<line x1="779" y1="44.5" x2="800" y2="44.5" stroke="#4c4c0c" stroke-width="0.9" />
<line x1="779" y1="49.0" x2="800" y2="49.0" stroke="#4c4c0c" stroke-width="0.9" />
<line x1="779" y1="53.5" x2="800" y2="53.5" stroke="#4c4c0c" stroke-width="0.9" />
<line x1="779" y1="58.0" x2="800" y2="58.0" stroke="#4c4c0c" stroke-width="0.9" />
<line x1="779" y1="62.5" x2="800" y2="62.5" stroke="#4c4c0c" stroke-width="0.9" />
<line x1="779" y1="67.0" x2="800" y2="67.0" stroke="#4c4c0c" stroke-width="0.9" />
<line x1="779" y1="71.5" x2="800" y2="71.5" stroke="#4c4c0c" stroke-width="0.9" />
</g>
<line x1="775.5" y1="25" x2="775.5" y2="40" stroke="#20a020" stroke-width="1.2" />
<rect x="807" y="33" width="104" height="45" fill="#0e0e0e"/>
<line x1="808.5" y1="33" x2="808.5" y2="78" stroke="#2a2a2a" stroke-width="1" />
<line x1="811.5" y1="33" x2="811.5" y2="78" stroke="#2a2a2a" stroke-width="1" />
<line x1="814.5" y1="33" x2="814.5" y2="78" stroke="#2a2a2a" stroke-width="1" />
<line x1="817.5" y1="33" x2="817.5" y2="78" stroke="#2a2a2a" stroke-width="1" />
<line x1="820.5" y1="33" x2="820.5" y2="78" stroke="#2a2a2a" stroke-width="1" />
<line x1="823.5" y1="33" x2="823.5" y2="78" stroke="#2a2a2a" stroke-width="1" />
<line x1="826.5" y1="33" x2="826.5" y2="78" stroke="#2a2a2a" stroke-width="1" />
<line x1="829.5" y1="33" x2="829.5" y2="78" stroke="#2a2a2a" stroke-width="1" />
<line x1="832.5" y1="33" x2="832.5" y2="78" stroke="#2a2a2a" stroke-width="1" />
<line x1="835.5" y1="33" x2="835.5" y2="78" stroke="#2a2a2a" stroke-width="1" />
<line x1="838.5" y1="33" x2="838.5" y2="78" stroke="#2a2a2a" stroke-width="1" />
<line x1="842.5" y1="33" x2="842.5" y2="78" stroke="#2a2a2a" stroke-width="1" />
<line x1="845.5" y1="33" x2="845.5" y2="78" stroke="#2a2a2a" stroke-width="1" />
<line x1="848.5" y1="33" x2="848.5" y2="78" stroke="#2a2a2a" stroke-width="1" />
<line x1="851.5" y1="33" x2="851.5" y2="78" stroke="#2a2a2a" stroke-width="1" />
<line x1="854.5" y1="33" x2="854.5" y2="78" stroke="#2a2a2a" stroke-width="1" />
<line x1="857.5" y1="33" x2="857.5" y2="78" stroke="#2a2a2a" stroke-width="1" />
<line x1="860.5" y1="33" x2="860.5" y2="78" stroke="#2a2a2a" stroke-width="1" />
<line x1="863.5" y1="33" x2="863.5" y2="78" stroke="#2a2a2a" stroke-width="1" />
<line x1="866.5" y1="33" x2="866.5" y2="78" stroke="#2a2a2a" stroke-width="1" />
<line x1="869.5" y1="33" x2="869.5" y2="78" stroke="#2a2a2a" stroke-width="1" />
<line x1="872.5" y1="33" x2="872.5" y2="78" stroke="#2a2a2a" stroke-width="1" />
<line x1="875.5" y1="33" x2="875.5" y2="78" stroke="#2a2a2a" stroke-width="1" />
<line x1="878.5" y1="33" x2="878.5" y2="78" stroke="#2a2a2a" stroke-width="1" />
<line x1="881.5" y1="33" x2="881.5" y2="78" stroke="#2a2a2a" stroke-width="1" />
<line x1="884.5" y1="33" x2="884.5" y2="78" stroke="#2a2a2a" stroke-width="1" />
<line x1="887.5" y1="33" x2="887.5" y2="78" stroke="#2a2a2a" stroke-width="1" />
<line x1="890.5" y1="33" x2="890.5" y2="78" stroke="#2a2a2a" stroke-width="1" />
<line x1="893.5" y1="33" x2="893.5" y2="78" stroke="#2a2a2a" stroke-width="1" />
<line x1="896.5" y1="33" x2="896.5" y2="78" stroke="#2a2a2a" stroke-width="1" />
<line x1="900.5" y1="33" x2="900.5" y2="78" stroke="#2a2a2a" stroke-width="1" />
<line x1="903.5" y1="33" x2="903.5" y2="78" stroke="#2a2a2a" stroke-width="1" />
<line x1="906.5" y1="33" x2="906.5" y2="78" stroke="#2a2a2a" stroke-width="1" />
<line x1="909.5" y1="33" x2="909.5" y2="78" stroke="#2a2a2a" stroke-width="1" />
<path d="M826 33 L829 27 L905 27 L910 33" stroke="#8a8816" stroke-width="1" fill="none" />
<rect x="846" y="58" width="34" height="8" stroke="#8a8816" stroke-width="1" fill="none" />
<rect x="846" y="66" width="34" height="8" stroke="#8a8816" stroke-width="1" fill="none" />
<line x1="806.5" y1="30" x2="806.5" y2="122" stroke="#8a8816" stroke-width="1.1" />
<line x1="911.5" y1="30" x2="911.5" y2="122" stroke="#8a8816" stroke-width="1.1" />
<line x1="702" y1="78" x2="806" y2="78" stroke="#8a8816" stroke-width="1" />
<rect x="727" y="92" width="27" height="13" stroke="#4a5866" stroke-width="1.4" fill="none" />
<rect x="757" y="98" width="34" height="9" stroke="#8a8816" stroke-width="1" fill="none" />
<rect x="757" y="107" width="34" height="11" stroke="#8a8816" stroke-width="1" fill="none" />
<rect x="735" y="122" width="13" height="14" fill="#16162e"/>
<line x1="742" y1="105" x2="742" y2="122" stroke="#20a020" stroke-width="1.5" />
<line x1="702" y1="121" x2="911" y2="121" stroke="#8a8816" stroke-width="1" />
<clipPath id="c6"><rect x="911" y="33" width="64" height="45"/></clipPath><g clip-path="url(#c6)">
<rect x="911" y="33" width="64" height="45" fill="#222205"/>
<path d="M914.4 31 Q910.4 55.5 914.4 80" stroke="#8a8816" stroke-width="1.9" fill="none" />
<path d="M921.2 31 Q917.2 55.5 921.2 80" stroke="#8a8816" stroke-width="1.9" fill="none" />
<path d="M928.0 31 Q924.0 55.5 928.0 80" stroke="#8a8816" stroke-width="1.9" fill="none" />
<path d="M934.8 31 Q930.8 55.5 934.8 80" stroke="#8a8816" stroke-width="1.9" fill="none" />
<path d="M941.6 31 Q937.6 55.5 941.6 80" stroke="#8a8816" stroke-width="1.9" fill="none" />
<path d="M948.4 31 Q944.4 55.5 948.4 80" stroke="#8a8816" stroke-width="1.9" fill="none" />
<path d="M955.2 31 Q951.2 55.5 955.2 80" stroke="#8a8816" stroke-width="1.9" fill="none" />
<path d="M962.0 31 Q958.0 55.5 962.0 80" stroke="#8a8816" stroke-width="1.9" fill="none" />
<path d="M968.8 31 Q964.8 55.5 968.8 80" stroke="#8a8816" stroke-width="1.9" fill="none" />
<path d="M975.6 31 Q971.6 55.5 975.6 80" stroke="#8a8816" stroke-width="1.9" fill="none" />
<line x1="911" y1="37" x2="975" y2="37" stroke="#4c4c0c" stroke-width="0.9" />
<line x1="911" y1="41.5" x2="975" y2="41.5" stroke="#4c4c0c" stroke-width="0.9" />
<line x1="911" y1="46.0" x2="975" y2="46.0" stroke="#4c4c0c" stroke-width="0.9" />
<line x1="911" y1="50.5" x2="975" y2="50.5" stroke="#4c4c0c" stroke-width="0.9" />
<line x1="911" y1="55.0" x2="975" y2="55.0" stroke="#4c4c0c" stroke-width="0.9" />
<line x1="911" y1="59.5" x2="975" y2="59.5" stroke="#4c4c0c" stroke-width="0.9" />
<line x1="911" y1="64.0" x2="975" y2="64.0" stroke="#4c4c0c" stroke-width="0.9" />
<line x1="911" y1="68.5" x2="975" y2="68.5" stroke="#4c4c0c" stroke-width="0.9" />
<line x1="911" y1="73.0" x2="975" y2="73.0" stroke="#4c4c0c" stroke-width="0.9" />
<line x1="911" y1="77.5" x2="975" y2="77.5" stroke="#4c4c0c" stroke-width="0.9" />
</g>
<clipPath id="c7"><rect x="911" y="78" width="64" height="43"/></clipPath><g clip-path="url(#c7)">
<rect x="911" y="78" width="64" height="43" fill="#222205"/>
<path d="M914.4 76 Q910.4 99.5 914.4 123" stroke="#8a8816" stroke-width="1.9" fill="none" />
<path d="M921.2 76 Q917.2 99.5 921.2 123" stroke="#8a8816" stroke-width="1.9" fill="none" />
<path d="M928.0 76 Q924.0 99.5 928.0 123" stroke="#8a8816" stroke-width="1.9" fill="none" />
<path d="M934.8 76 Q930.8 99.5 934.8 123" stroke="#8a8816" stroke-width="1.9" fill="none" />
<path d="M941.6 76 Q937.6 99.5 941.6 123" stroke="#8a8816" stroke-width="1.9" fill="none" />
<path d="M948.4 76 Q944.4 99.5 948.4 123" stroke="#8a8816" stroke-width="1.9" fill="none" />
<path d="M955.2 76 Q951.2 99.5 955.2 123" stroke="#8a8816" stroke-width="1.9" fill="none" />
<path d="M962.0 76 Q958.0 99.5 962.0 123" stroke="#8a8816" stroke-width="1.9" fill="none" />
<path d="M968.8 76 Q964.8 99.5 968.8 123" stroke="#8a8816" stroke-width="1.9" fill="none" />
<path d="M975.6 76 Q971.6 99.5 975.6 123" stroke="#8a8816" stroke-width="1.9" fill="none" />
<line x1="911" y1="82" x2="975" y2="82" stroke="#4c4c0c" stroke-width="0.9" />
<line x1="911" y1="86.5" x2="975" y2="86.5" stroke="#4c4c0c" stroke-width="0.9" />
<line x1="911" y1="91.0" x2="975" y2="91.0" stroke="#4c4c0c" stroke-width="0.9" />
<line x1="911" y1="95.5" x2="975" y2="95.5" stroke="#4c4c0c" stroke-width="0.9" />
<line x1="911" y1="100.0" x2="975" y2="100.0" stroke="#4c4c0c" stroke-width="0.9" />
<line x1="911" y1="104.5" x2="975" y2="104.5" stroke="#4c4c0c" stroke-width="0.9" />
<line x1="911" y1="109.0" x2="975" y2="109.0" stroke="#4c4c0c" stroke-width="0.9" />
<line x1="911" y1="113.5" x2="975" y2="113.5" stroke="#4c4c0c" stroke-width="0.9" />
<line x1="911" y1="118.0" x2="975" y2="118.0" stroke="#4c4c0c" stroke-width="0.9" />
</g>
<clipPath id="c8"><rect x="915" y="121" width="77" height="76"/></clipPath><g clip-path="url(#c8)">
<rect x="915" y="121" width="77" height="76" fill="#222205"/>
<path d="M918.4 119 Q913.4 159.0 918.4 199" stroke="#8a8816" stroke-width="1.9" fill="none" />
<path d="M925.2 119 Q920.2 159.0 925.2 199" stroke="#8a8816" stroke-width="1.9" fill="none" />
<path d="M932.0 119 Q927.0 159.0 932.0 199" stroke="#8a8816" stroke-width="1.9" fill="none" />
<path d="M938.8 119 Q933.8 159.0 938.8 199" stroke="#8a8816" stroke-width="1.9" fill="none" />
<path d="M945.6 119 Q940.6 159.0 945.6 199" stroke="#8a8816" stroke-width="1.9" fill="none" />
<path d="M952.4 119 Q947.4 159.0 952.4 199" stroke="#8a8816" stroke-width="1.9" fill="none" />
<path d="M959.2 119 Q954.2 159.0 959.2 199" stroke="#8a8816" stroke-width="1.9" fill="none" />
<path d="M966.0 119 Q961.0 159.0 966.0 199" stroke="#8a8816" stroke-width="1.9" fill="none" />
<path d="M972.8 119 Q967.8 159.0 972.8 199" stroke="#8a8816" stroke-width="1.9" fill="none" />
<path d="M979.6 119 Q974.6 159.0 979.6 199" stroke="#8a8816" stroke-width="1.9" fill="none" />
<path d="M986.4 119 Q981.4 159.0 986.4 199" stroke="#8a8816" stroke-width="1.9" fill="none" />
<path d="M993.2 119 Q988.2 159.0 993.2 199" stroke="#8a8816" stroke-width="1.9" fill="none" />
<line x1="915" y1="125" x2="992" y2="125" stroke="#4c4c0c" stroke-width="0.9" />
<line x1="915" y1="129.5" x2="992" y2="129.5" stroke="#4c4c0c" stroke-width="0.9" />
<line x1="915" y1="134.0" x2="992" y2="134.0" stroke="#4c4c0c" stroke-width="0.9" />
<line x1="915" y1="138.5" x2="992" y2="138.5" stroke="#4c4c0c" stroke-width="0.9" />
<line x1="915" y1="143.0" x2="992" y2="143.0" stroke="#4c4c0c" stroke-width="0.9" />
<line x1="915" y1="147.5" x2="992" y2="147.5" stroke="#4c4c0c" stroke-width="0.9" />
<line x1="915" y1="152.0" x2="992" y2="152.0" stroke="#4c4c0c" stroke-width="0.9" />
<line x1="915" y1="156.5" x2="992" y2="156.5" stroke="#4c4c0c" stroke-width="0.9" />
<line x1="915" y1="161.0" x2="992" y2="161.0" stroke="#4c4c0c" stroke-width="0.9" />
<line x1="915" y1="165.5" x2="992" y2="165.5" stroke="#4c4c0c" stroke-width="0.9" />
<line x1="915" y1="170.0" x2="992" y2="170.0" stroke="#4c4c0c" stroke-width="0.9" />
<line x1="915" y1="174.5" x2="992" y2="174.5" stroke="#4c4c0c" stroke-width="0.9" />
<line x1="915" y1="179.0" x2="992" y2="179.0" stroke="#4c4c0c" stroke-width="0.9" />
<line x1="915" y1="183.5" x2="992" y2="183.5" stroke="#4c4c0c" stroke-width="0.9" />
<line x1="915" y1="188.0" x2="992" y2="188.0" stroke="#4c4c0c" stroke-width="0.9" />
<line x1="915" y1="192.5" x2="992" y2="192.5" stroke="#4c4c0c" stroke-width="0.9" />
</g>
<path d="M1014 35 L975 120 M1014 35 L1019 120" stroke="#8a8816" stroke-width="1" fill="none" />
<path d="M1014 36 Q1022 80 1018 120" stroke="#8a8816" stroke-width="1" fill="none" />
<path d="M995 127 L1020 193 M1003 125 L975 190" stroke="#8a8816" stroke-width="0.8" fill="none" stroke-dasharray="2 2"/>
<path d="M1017 125 Q1027 160 1024 196" stroke="#8a8816" stroke-width="1" fill="none" />
<line x1="1043.5" y1="30" x2="1043.5" y2="198" stroke="#8a8816" stroke-width="1.1" />
<line x1="911" y1="197.5" x2="1043" y2="197.5" stroke="#8a8816" stroke-width="1.5" />
<rect x="1059" y="31" width="38" height="167" stroke="#8c1010" stroke-width="2" fill="none" />
<line x1="1059" y1="54" x2="1096" y2="54" stroke="#8a8816" stroke-width="1" />
<line x1="1059" y1="77" x2="1096" y2="77" stroke="#8a8816" stroke-width="1" />
<line x1="1059" y1="110" x2="1096" y2="110" stroke="#8a8816" stroke-width="1" />
<line x1="1059" y1="155" x2="1096" y2="155" stroke="#8a8816" stroke-width="1" />
<line x1="1059" y1="168" x2="1096" y2="168" stroke="#8a8816" stroke-width="1" />
<line x1="1090.5" y1="0" x2="1090.5" y2="198" stroke="#3a3a30" stroke-width="1" />
<path d="M1082 0 L1082 30" stroke="#8c1010" stroke-width="1.2" fill="none" />
<path d="M1080 0 L1080 30" stroke="#4a5060" stroke-width="1.2" fill="none" />
<line x1="1080" y1="8" x2="1090" y2="8" stroke="#8c1010" stroke-width="1" />
<line x1="1080" y1="18" x2="1090" y2="18" stroke="#8c1010" stroke-width="1" />
<clipPath id="c9"><rect x="1098" y="0" width="72" height="200"/></clipPath><g clip-path="url(#c9)">
<path d="M1110.0 -5 Q1097.0 60 1108.0 125" stroke="#8a8816" stroke-width="1.1" fill="none" />
<path d="M1116.6 -5 Q1103.6 60 1114.6 125" stroke="#8a8816" stroke-width="1.1" fill="none" />
<path d="M1123.2 -5 Q1110.2 60 1121.2 125" stroke="#8a8816" stroke-width="1.1" fill="none" />
<path d="M1129.8 -5 Q1116.8 60 1127.8 125" stroke="#8a8816" stroke-width="1.1" fill="none" />
<path d="M1136.4 -5 Q1123.4 60 1134.4 125" stroke="#8a8816" stroke-width="1.1" fill="none" />
<path d="M1143.0 -5 Q1130.0 60 1141.0 125" stroke="#8a8816" stroke-width="1.1" fill="none" />
<path d="M1149.6 -5 Q1136.6 60 1147.6 125" stroke="#8a8816" stroke-width="1.1" fill="none" />
<path d="M1156.2 -5 Q1143.2 60 1154.2 125" stroke="#8a8816" stroke-width="1.1" fill="none" />
<path d="M1162.8 -5 Q1149.8 60 1160.8 125" stroke="#8a8816" stroke-width="1.1" fill="none" />
<path d="M1169.4 -5 Q1156.4 60 1167.4 125" stroke="#8a8816" stroke-width="1.1" fill="none" />
<path d="M1176.0 -5 Q1163.0 60 1174.0 125" stroke="#8a8816" stroke-width="1.1" fill="none" />
<line x1="1141" y1="0" x2="1141" y2="125" stroke="#8a8816" stroke-width="1.3" />
<rect x="1120" y="-3" width="22" height="6" stroke="#8a8816" stroke-width="1.5" fill="none" />
<line x1="1098" y1="103" x2="1141" y2="103" stroke="#8a8816" stroke-width="1" />
</g>
<line x1="702" y1="83.5" x2="1170" y2="83.5" stroke="#ffffff" stroke-width="3" />
<rect x="826" y="128" width="19" height="84" stroke="#8a8816" stroke-width="1" fill="none" />
<line x1="830" y1="140" x2="830" y2="200" stroke="#8a8816" stroke-width="1" />
<line x1="835" y1="140" x2="835" y2="200" stroke="#8a8816" stroke-width="1" />
<line x1="840" y1="140" x2="840" y2="200" stroke="#8a8816" stroke-width="1" />
<line x1="827" y1="132" x2="844" y2="132" stroke="#4a4a0c" stroke-width="1" />
<line x1="827" y1="138" x2="844" y2="138" stroke="#4a4a0c" stroke-width="1" />
<line x1="827" y1="144" x2="844" y2="144" stroke="#4a4a0c" stroke-width="1" />
<line x1="827" y1="150" x2="844" y2="150" stroke="#4a4a0c" stroke-width="1" />
<line x1="827" y1="156" x2="844" y2="156" stroke="#4a4a0c" stroke-width="1" />
<line x1="827" y1="162" x2="844" y2="162" stroke="#4a4a0c" stroke-width="1" />
<line x1="827" y1="168" x2="844" y2="168" stroke="#4a4a0c" stroke-width="1" />
<line x1="827" y1="174" x2="844" y2="174" stroke="#4a4a0c" stroke-width="1" />
<line x1="827" y1="180" x2="844" y2="180" stroke="#4a4a0c" stroke-width="1" />
<line x1="827" y1="186" x2="844" y2="186" stroke="#4a4a0c" stroke-width="1" />
<line x1="827" y1="192" x2="844" y2="192" stroke="#4a4a0c" stroke-width="1" />
<line x1="827" y1="198" x2="844" y2="198" stroke="#4a4a0c" stroke-width="1" />
<line x1="827" y1="204" x2="844" y2="204" stroke="#4a4a0c" stroke-width="1" />
<rect x="870" y="152" width="35" height="8" stroke="#8a8816" stroke-width="1" fill="none" />
<rect x="870" y="160" width="35" height="7" stroke="#8a8816" stroke-width="1" fill="none" />
<rect x="870" y="167" width="35" height="8" stroke="#8a8816" stroke-width="1" fill="none" />
<circle cx="750" cy="160" r="20" stroke="#8a8816" stroke-width="1" fill="none" />
<clipPath id="c10"><rect x="745" y="140" width="20" height="35"/></clipPath><g clip-path="url(#c10)">
<rect x="745" y="140" width="20" height="35" fill="#1c1c04"/>
<path d="M747.0 138 Q747.0 157.5 747.0 177" stroke="#8a8816" stroke-width="1.9" fill="none" />
<path d="M751.0 138 Q751.0 157.5 751.0 177" stroke="#8a8816" stroke-width="1.9" fill="none" />
<path d="M755.0 138 Q755.0 157.5 755.0 177" stroke="#8a8816" stroke-width="1.9" fill="none" />
<path d="M759.0 138 Q759.0 157.5 759.0 177" stroke="#8a8816" stroke-width="1.9" fill="none" />
<path d="M763.0 138 Q763.0 157.5 763.0 177" stroke="#8a8816" stroke-width="1.9" fill="none" />
<path d="M767.0 138 Q767.0 157.5 767.0 177" stroke="#8a8816" stroke-width="1.9" fill="none" />
<line x1="745" y1="144" x2="765" y2="144" stroke="#4c4c0c" stroke-width="0.9" />
<line x1="745" y1="148.5" x2="765" y2="148.5" stroke="#4c4c0c" stroke-width="0.9" />
<line x1="745" y1="153.0" x2="765" y2="153.0" stroke="#4c4c0c" stroke-width="0.9" />
<line x1="745" y1="157.5" x2="765" y2="157.5" stroke="#4c4c0c" stroke-width="0.9" />
<line x1="745" y1="162.0" x2="765" y2="162.0" stroke="#4c4c0c" stroke-width="0.9" />
<line x1="745" y1="166.5" x2="765" y2="166.5" stroke="#4c4c0c" stroke-width="0.9" />
<line x1="745" y1="171.0" x2="765" y2="171.0" stroke="#4c4c0c" stroke-width="0.9" />
</g>
<rect x="731" y="176" width="17" height="14" stroke="#8a8816" stroke-width="1" fill="none" />
<line x1="731" y1="176" x2="748" y2="190" stroke="#8a8816" stroke-width="1" />
<line x1="748" y1="176" x2="731" y2="190" stroke="#8a8816" stroke-width="1" />
<rect x="730" y="190" width="78" height="22" stroke="#8a8816" stroke-width="1" fill="none" />
<rect x="733" y="195" width="35" height="12" stroke="#8a8816" stroke-width="1" fill="none" />
<rect x="702" y="175" width="20" height="25" stroke="#8a8816" stroke-width="1" fill="none" />
<line x1="702" y1="187" x2="722" y2="187" stroke="#8a8816" stroke-width="1" />
<line x1="745" y1="124" x2="808" y2="124" stroke="#8a8816" stroke-width="1" />
<line x1="808" y1="124" x2="808" y2="182" stroke="#8a8816" stroke-width="1" />
<line x1="730" y1="190" x2="730" y2="124" stroke="#8a8816" stroke-width="1" />
<clipPath id="c11"><rect x="920" y="124" width="20" height="94"/></clipPath><g clip-path="url(#c11)">
<rect x="920" y="124" width="20" height="94" fill="#222205"/>
<path d="M923.0 122 Q927.0 171.0 923.0 220" stroke="#8a8816" stroke-width="1.9" fill="none" />
<path d="M929.0 122 Q933.0 171.0 929.0 220" stroke="#8a8816" stroke-width="1.9" fill="none" />
<path d="M935.0 122 Q939.0 171.0 935.0 220" stroke="#8a8816" stroke-width="1.9" fill="none" />
<path d="M941.0 122 Q945.0 171.0 941.0 220" stroke="#8a8816" stroke-width="1.9" fill="none" />
<line x1="920" y1="128" x2="940" y2="128" stroke="#4c4c0c" stroke-width="0.9" />
<line x1="920" y1="132.5" x2="940" y2="132.5" stroke="#4c4c0c" stroke-width="0.9" />
<line x1="920" y1="137.0" x2="940" y2="137.0" stroke="#4c4c0c" stroke-width="0.9" />
<line x1="920" y1="141.5" x2="940" y2="141.5" stroke="#4c4c0c" stroke-width="0.9" />
<line x1="920" y1="146.0" x2="940" y2="146.0" stroke="#4c4c0c" stroke-width="0.9" />
<line x1="920" y1="150.5" x2="940" y2="150.5" stroke="#4c4c0c" stroke-width="0.9" />
<line x1="920" y1="155.0" x2="940" y2="155.0" stroke="#4c4c0c" stroke-width="0.9" />
<line x1="920" y1="159.5" x2="940" y2="159.5" stroke="#4c4c0c" stroke-width="0.9" />
<line x1="920" y1="164.0" x2="940" y2="164.0" stroke="#4c4c0c" stroke-width="0.9" />
<line x1="920" y1="168.5" x2="940" y2="168.5" stroke="#4c4c0c" stroke-width="0.9" />
<line x1="920" y1="173.0" x2="940" y2="173.0" stroke="#4c4c0c" stroke-width="0.9" />
<line x1="920" y1="177.5" x2="940" y2="177.5" stroke="#4c4c0c" stroke-width="0.9" />
<line x1="920" y1="182.0" x2="940" y2="182.0" stroke="#4c4c0c" stroke-width="0.9" />
<line x1="920" y1="186.5" x2="940" y2="186.5" stroke="#4c4c0c" stroke-width="0.9" />
<line x1="920" y1="191.0" x2="940" y2="191.0" stroke="#4c4c0c" stroke-width="0.9" />
<line x1="920" y1="195.5" x2="940" y2="195.5" stroke="#4c4c0c" stroke-width="0.9" />
<line x1="920" y1="200.0" x2="940" y2="200.0" stroke="#4c4c0c" stroke-width="0.9" />
<line x1="920" y1="204.5" x2="940" y2="204.5" stroke="#4c4c0c" stroke-width="0.9" />
<line x1="920" y1="209.0" x2="940" y2="209.0" stroke="#4c4c0c" stroke-width="0.9" />
<line x1="920" y1="213.5" x2="940" y2="213.5" stroke="#4c4c0c" stroke-width="0.9" />
</g>
<rect x="930" y="199" width="35" height="20" fill="#121212"/>
<line x1="930.5" y1="199" x2="930.5" y2="219" stroke="#2a2a2a" stroke-width="1" />
<line x1="933.5" y1="199" x2="933.5" y2="219" stroke="#2a2a2a" stroke-width="1" />
<line x1="936.5" y1="199" x2="936.5" y2="219" stroke="#2a2a2a" stroke-width="1" />
<line x1="939.5" y1="199" x2="939.5" y2="219" stroke="#2a2a2a" stroke-width="1" />
<line x1="942.5" y1="199" x2="942.5" y2="219" stroke="#2a2a2a" stroke-width="1" />
<line x1="945.5" y1="199" x2="945.5" y2="219" stroke="#2a2a2a" stroke-width="1" />
<line x1="948.5" y1="199" x2="948.5" y2="219" stroke="#2a2a2a" stroke-width="1" />
<line x1="951.5" y1="199" x2="951.5" y2="219" stroke="#2a2a2a" stroke-width="1" />
<line x1="954.5" y1="199" x2="954.5" y2="219" stroke="#2a2a2a" stroke-width="1" />
<line x1="957.5" y1="199" x2="957.5" y2="219" stroke="#2a2a2a" stroke-width="1" />
<line x1="960.5" y1="199" x2="960.5" y2="219" stroke="#2a2a2a" stroke-width="1" />
<line x1="963.5" y1="199" x2="963.5" y2="219" stroke="#2a2a2a" stroke-width="1" />
<path d="M965 199 Q1010 205 1010 235" stroke="#8a8816" stroke-width="1" fill="none" />
<rect x="1078" y="208" width="28" height="13" stroke="#4a5866" stroke-width="1.3" fill="none" />
<line x1="1106" y1="215" x2="1114" y2="215" stroke="#20a020" stroke-width="1.5" />
<rect x="1115" y="207" width="12" height="18" fill="#16162e"/>
<line x1="1043" y1="207.5" x2="1170" y2="207.5" stroke="#8a8816" stroke-width="1.1" />
<clipPath id="c12"><rect x="1114" y="226" width="28" height="26"/></clipPath><g clip-path="url(#c12)">
<rect x="1114" y="226" width="28" height="26" fill="#141403"/>
<path d="M1117.0 224 Q1113.0 239.0 1117.0 254" stroke="#8a8816" stroke-width="1.9" fill="none" />
<path d="M1123.0 224 Q1119.0 239.0 1123.0 254" stroke="#8a8816" stroke-width="1.9" fill="none" />
<path d="M1129.0 224 Q1125.0 239.0 1129.0 254" stroke="#8a8816" stroke-width="1.9" fill="none" />
<path d="M1135.0 224 Q1131.0 239.0 1135.0 254" stroke="#8a8816" stroke-width="1.9" fill="none" />
<path d="M1141.0 224 Q1137.0 239.0 1141.0 254" stroke="#8a8816" stroke-width="1.9" fill="none" />
<path d="M1147.0 224 Q1143.0 239.0 1147.0 254" stroke="#8a8816" stroke-width="1.9" fill="none" />
</g>
<circle cx="1145" cy="143" r="24" stroke="#8a8816" stroke-width="1.1" fill="none" />
<rect x="1140" y="121" width="15" height="5.5" stroke="#8a8816" stroke-width="1" fill="none" />
<rect x="1140" y="127" width="15" height="5.5" stroke="#8a8816" stroke-width="1" fill="none" />
<rect x="1140" y="133" width="15" height="5.5" stroke="#8a8816" stroke-width="1" fill="none" />
<rect x="1140" y="139" width="15" height="5.5" stroke="#8a8816" stroke-width="1" fill="none" />
<rect x="1140" y="145" width="15" height="5.5" stroke="#8a8816" stroke-width="1" fill="none" />
<rect x="1140" y="151" width="15" height="5.5" stroke="#8a8816" stroke-width="1" fill="none" />
<rect x="1140" y="157" width="15" height="5.5" stroke="#8a8816" stroke-width="1" fill="none" />
<rect x="1140" y="163" width="15" height="5.5" stroke="#8a8816" stroke-width="1" fill="none" />
<rect x="1155" y="125" width="10" height="18" stroke="#8a8816" stroke-width="1" fill="none" />
<rect x="1155" y="143" width="10" height="18" stroke="#8a8816" stroke-width="1" fill="none" />
<line x1="1113" y1="120.8" x2="1170" y2="120.8" stroke="#8a8816" stroke-width="1.1" />
<line x1="1113.5" y1="100" x2="1113.5" y2="240" stroke="#8a8816" stroke-width="1.1" />
<path d="M1113 170 l6 -3 l5 4 l6 -3 l6 3 l6 -2 l28 0" stroke="#8a8816" stroke-width="1" fill="none" />
<path d="M1113 185 l6 3 l-5 5 l6 3 l-6 4" stroke="#8a8816" stroke-width="1" fill="none" />
<path d="M1140 176 q10 -4 25 0 M1140 184 q10 4 25 0" stroke="#8a8816" stroke-width="1.3" fill="none" />
<line x1="1113" y1="224.5" x2="1170" y2="224.5" stroke="#8a8816" stroke-width="1.1" />
<path d="M1055 212 Q1020 220 1020 255" stroke="#8a8816" stroke-width="1" fill="none" />
<rect x="740" y="238" width="80" height="37" stroke="#8a8816" stroke-width="1" fill="none" rx="11"/>
<rect x="742" y="249" width="85" height="7" stroke="#8a8816" stroke-width="1" fill="none" />
<rect x="742" y="257" width="85" height="7" stroke="#8a8816" stroke-width="1" fill="none" />
<rect x="780" y="250" width="45" height="13" fill="#2a2a06"/>
<line x1="742" y1="256.5" x2="827" y2="256.5" stroke="#4a5866" stroke-width="1.2" />
<ellipse cx="775" cy="291" rx="47" ry="17" fill="#0c0c0c"/>
<clipPath id="c13"><ellipse cx="775" cy="291" rx="47" ry="17"/></clipPath><g clip-path="url(#c13)">
<line x1="728.5" y1="274" x2="728.5" y2="309" stroke="#262626" stroke-width="1" />
<line x1="731.5" y1="274" x2="731.5" y2="309" stroke="#262626" stroke-width="1" />
<line x1="734.5" y1="274" x2="734.5" y2="309" stroke="#262626" stroke-width="1" />
<line x1="737.5" y1="274" x2="737.5" y2="309" stroke="#262626" stroke-width="1" />
<line x1="740.5" y1="274" x2="740.5" y2="309" stroke="#262626" stroke-width="1" />
<line x1="744.5" y1="274" x2="744.5" y2="309" stroke="#262626" stroke-width="1" />
<line x1="747.5" y1="274" x2="747.5" y2="309" stroke="#262626" stroke-width="1" />
<line x1="750.5" y1="274" x2="750.5" y2="309" stroke="#262626" stroke-width="1" />
<line x1="753.5" y1="274" x2="753.5" y2="309" stroke="#262626" stroke-width="1" />
<line x1="756.5" y1="274" x2="756.5" y2="309" stroke="#262626" stroke-width="1" />
<line x1="759.5" y1="274" x2="759.5" y2="309" stroke="#262626" stroke-width="1" />
<line x1="762.5" y1="274" x2="762.5" y2="309" stroke="#262626" stroke-width="1" />
<line x1="765.5" y1="274" x2="765.5" y2="309" stroke="#262626" stroke-width="1" />
<line x1="768.5" y1="274" x2="768.5" y2="309" stroke="#262626" stroke-width="1" />
<line x1="771.5" y1="274" x2="771.5" y2="309" stroke="#262626" stroke-width="1" />
<line x1="775.5" y1="274" x2="775.5" y2="309" stroke="#262626" stroke-width="1" />
<line x1="778.5" y1="274" x2="778.5" y2="309" stroke="#262626" stroke-width="1" />
<line x1="781.5" y1="274" x2="781.5" y2="309" stroke="#262626" stroke-width="1" />
<line x1="784.5" y1="274" x2="784.5" y2="309" stroke="#262626" stroke-width="1" />
<line x1="787.5" y1="274" x2="787.5" y2="309" stroke="#262626" stroke-width="1" />
<line x1="790.5" y1="274" x2="790.5" y2="309" stroke="#262626" stroke-width="1" />
<line x1="793.5" y1="274" x2="793.5" y2="309" stroke="#262626" stroke-width="1" />
<line x1="796.5" y1="274" x2="796.5" y2="309" stroke="#262626" stroke-width="1" />
<line x1="799.5" y1="274" x2="799.5" y2="309" stroke="#262626" stroke-width="1" />
<line x1="802.5" y1="274" x2="802.5" y2="309" stroke="#262626" stroke-width="1" />
<line x1="806.5" y1="274" x2="806.5" y2="309" stroke="#262626" stroke-width="1" />
<line x1="809.5" y1="274" x2="809.5" y2="309" stroke="#262626" stroke-width="1" />
<line x1="812.5" y1="274" x2="812.5" y2="309" stroke="#262626" stroke-width="1" />
<line x1="815.5" y1="274" x2="815.5" y2="309" stroke="#262626" stroke-width="1" />
<line x1="818.5" y1="274" x2="818.5" y2="309" stroke="#262626" stroke-width="1" />
<line x1="821.5" y1="274" x2="821.5" y2="309" stroke="#262626" stroke-width="1" />
</g>
<ellipse cx="775" cy="291" rx="47" ry="17" fill="none" stroke="#8a8816" stroke-width="1"/>
<path d="M754 305.5 A21 21 0 0 1 796 305.5" stroke="#8a8816" stroke-width="1" fill="none" />
<rect x="754" y="305" width="21" height="13" stroke="#8a8816" stroke-width="1" fill="none" />
<rect x="736" y="280" width="24" height="14" stroke="#8a8816" stroke-width="1" fill="none" />
<path d="M702 322.5 L752 322.5 L752 462" stroke="#1a9a1a" stroke-width="1.5" fill="none" stroke-dasharray="3 2"/>
<path d="M730 330 L790 330 Q835 335 837 385 L838 420" stroke="#8a8816" stroke-width="1" fill="none" />
<rect x="705" y="337" width="25" height="54" stroke="#8a8816" stroke-width="1" fill="none" rx="3"/>
<path d="M710 360 A10 10 0 0 1 728 360" stroke="#8a8816" stroke-width="1" fill="none" />
<clipPath id="c14"><rect x="708" y="362" width="20" height="16"/></clipPath><g clip-path="url(#c14)">
<rect x="708" y="362" width="20" height="16" fill="#1c1c04"/>
<path d="M710.0 360 Q710.0 370.0 710.0 380" stroke="#8a8816" stroke-width="1.9" fill="none" />
<path d="M714.0 360 Q714.0 370.0 714.0 380" stroke="#8a8816" stroke-width="1.9" fill="none" />
<path d="M718.0 360 Q718.0 370.0 718.0 380" stroke="#8a8816" stroke-width="1.9" fill="none" />
<path d="M722.0 360 Q722.0 370.0 722.0 380" stroke="#8a8816" stroke-width="1.9" fill="none" />
<path d="M726.0 360 Q726.0 370.0 726.0 380" stroke="#8a8816" stroke-width="1.9" fill="none" />
<path d="M730.0 360 Q730.0 370.0 730.0 380" stroke="#8a8816" stroke-width="1.9" fill="none" />
<line x1="708" y1="366" x2="728" y2="366" stroke="#4c4c0c" stroke-width="0.9" />
<line x1="708" y1="370.5" x2="728" y2="370.5" stroke="#4c4c0c" stroke-width="0.9" />
<line x1="708" y1="375.0" x2="728" y2="375.0" stroke="#4c4c0c" stroke-width="0.9" />
</g>
<rect x="731" y="358" width="19" height="17" fill="#16162e"/>
<rect x="759" y="361" width="28" height="14" stroke="#4a5866" stroke-width="1.3" fill="none" rx="2"/>
<circle cx="898" cy="279.3" r="33" fill="#0c0c0c"/>
<clipPath id="c15"><circle cx="898" cy="279.3" r="33"/></clipPath><g clip-path="url(#c15)">
<line x1="865.5" y1="246" x2="865.5" y2="313" stroke="#262626" stroke-width="1" />
<line x1="868.5" y1="246" x2="868.5" y2="313" stroke="#262626" stroke-width="1" />
<line x1="871.5" y1="246" x2="871.5" y2="313" stroke="#262626" stroke-width="1" />
<line x1="874.5" y1="246" x2="874.5" y2="313" stroke="#262626" stroke-width="1" />
<line x1="877.5" y1="246" x2="877.5" y2="313" stroke="#262626" stroke-width="1" />
<line x1="881.5" y1="246" x2="881.5" y2="313" stroke="#262626" stroke-width="1" />
<line x1="884.5" y1="246" x2="884.5" y2="313" stroke="#262626" stroke-width="1" />
<line x1="887.5" y1="246" x2="887.5" y2="313" stroke="#262626" stroke-width="1" />
<line x1="890.5" y1="246" x2="890.5" y2="313" stroke="#262626" stroke-width="1" />
<line x1="893.5" y1="246" x2="893.5" y2="313" stroke="#262626" stroke-width="1" />
<line x1="896.5" y1="246" x2="896.5" y2="313" stroke="#262626" stroke-width="1" />
<line x1="899.5" y1="246" x2="899.5" y2="313" stroke="#262626" stroke-width="1" />
<line x1="902.5" y1="246" x2="902.5" y2="313" stroke="#262626" stroke-width="1" />
<line x1="905.5" y1="246" x2="905.5" y2="313" stroke="#262626" stroke-width="1" />
<line x1="908.5" y1="246" x2="908.5" y2="313" stroke="#262626" stroke-width="1" />
<line x1="912.5" y1="246" x2="912.5" y2="313" stroke="#262626" stroke-width="1" />
<line x1="915.5" y1="246" x2="915.5" y2="313" stroke="#262626" stroke-width="1" />
<line x1="918.5" y1="246" x2="918.5" y2="313" stroke="#262626" stroke-width="1" />
<line x1="921.5" y1="246" x2="921.5" y2="313" stroke="#262626" stroke-width="1" />
<line x1="924.5" y1="246" x2="924.5" y2="313" stroke="#262626" stroke-width="1" />
<line x1="927.5" y1="246" x2="927.5" y2="313" stroke="#262626" stroke-width="1" />
<line x1="930.5" y1="246" x2="930.5" y2="313" stroke="#262626" stroke-width="1" />
</g>
<circle cx="898" cy="279.3" r="33" stroke="#8a8816" stroke-width="1.1" fill="none" />
<path d="M865.5 290 A16 16 0 0 1 896.5 311" stroke="#8a8816" stroke-width="1" fill="none" />
<rect x="852" y="284" width="24" height="15" stroke="#8a8816" stroke-width="1" fill="none" />
<line x1="852" y1="291.5" x2="876" y2="291.5" stroke="#8a8816" stroke-width="1" />
<rect x="883" y="259" width="23" height="10" stroke="#8a8816" stroke-width="1" fill="none" />
<line x1="883" y1="264" x2="906" y2="264" stroke="#8a8816" stroke-width="1" />
<circle cx="955" cy="302" r="45" stroke="#8a8816" stroke-width="1.2" fill="none" />
<line x1="925" y1="270" x2="986" y2="334" stroke="#8a8816" stroke-width="0.8" />
<line x1="986" y1="270" x2="925" y2="334" stroke="#8a8816" stroke-width="0.8" />
<rect x="1053" y="246" width="36" height="24" stroke="#8a8816" stroke-width="1" fill="none" />
<rect x="1053" y="282" width="36" height="24" stroke="#8a8816" stroke-width="1" fill="none" />
<line x1="1022" y1="279.5" x2="1113" y2="279.5" stroke="#8a8816" stroke-width="1" />
<path d="M1022 250 L1022 340 Q1022 347 1030 347 L1114 347 L1114 310" stroke="#8a8816" stroke-width="1" fill="none" />
<clipPath id="c16"><rect x="1114" y="245" width="26" height="67"/></clipPath><g clip-path="url(#c16)">
<rect x="1114" y="245" width="26" height="67" fill="#222205"/>
<path d="M1116.5 243 Q1114.5 278.5 1116.5 314" stroke="#8a8816" stroke-width="1.9" fill="none" />
<path d="M1121.5 243 Q1119.5 278.5 1121.5 314" stroke="#8a8816" stroke-width="1.9" fill="none" />
<path d="M1126.5 243 Q1124.5 278.5 1126.5 314" stroke="#8a8816" stroke-width="1.9" fill="none" />
<path d="M1131.5 243 Q1129.5 278.5 1131.5 314" stroke="#8a8816" stroke-width="1.9" fill="none" />
<path d="M1136.5 243 Q1134.5 278.5 1136.5 314" stroke="#8a8816" stroke-width="1.9" fill="none" />
<path d="M1141.5 243 Q1139.5 278.5 1141.5 314" stroke="#8a8816" stroke-width="1.9" fill="none" />
<line x1="1114" y1="249" x2="1140" y2="249" stroke="#4c4c0c" stroke-width="0.9" />
<line x1="1114" y1="253.5" x2="1140" y2="253.5" stroke="#4c4c0c" stroke-width="0.9" />
<line x1="1114" y1="258.0" x2="1140" y2="258.0" stroke="#4c4c0c" stroke-width="0.9" />
<line x1="1114" y1="262.5" x2="1140" y2="262.5" stroke="#4c4c0c" stroke-width="0.9" />
<line x1="1114" y1="267.0" x2="1140" y2="267.0" stroke="#4c4c0c" stroke-width="0.9" />
<line x1="1114" y1="271.5" x2="1140" y2="271.5" stroke="#4c4c0c" stroke-width="0.9" />
<line x1="1114" y1="276.0" x2="1140" y2="276.0" stroke="#4c4c0c" stroke-width="0.9" />
<line x1="1114" y1="280.5" x2="1140" y2="280.5" stroke="#4c4c0c" stroke-width="0.9" />
<line x1="1114" y1="285.0" x2="1140" y2="285.0" stroke="#4c4c0c" stroke-width="0.9" />
<line x1="1114" y1="289.5" x2="1140" y2="289.5" stroke="#4c4c0c" stroke-width="0.9" />
<line x1="1114" y1="294.0" x2="1140" y2="294.0" stroke="#4c4c0c" stroke-width="0.9" />
<line x1="1114" y1="298.5" x2="1140" y2="298.5" stroke="#4c4c0c" stroke-width="0.9" />
<line x1="1114" y1="303.0" x2="1140" y2="303.0" stroke="#4c4c0c" stroke-width="0.9" />
<line x1="1114" y1="307.5" x2="1140" y2="307.5" stroke="#4c4c0c" stroke-width="0.9" />
</g>
<path d="M1140 245 L1170 210 M1140 310 L1170 250 M1140 260 L1170 290" stroke="#8a8816" stroke-width="1" fill="none" />
<rect x="1114" y="312" width="56" height="15" stroke="#8a8816" stroke-width="1" fill="none" />
<clipPath id="c17"><rect x="1135" y="312" width="15" height="15"/></clipPath><g clip-path="url(#c17)">
<path d="M1136.5 310 Q1136.5 319.5 1136.5 329" stroke="#8a8816" stroke-width="1.9" fill="none" />
<path d="M1139.5 310 Q1139.5 319.5 1139.5 329" stroke="#8a8816" stroke-width="1.9" fill="none" />
<path d="M1142.5 310 Q1142.5 319.5 1142.5 329" stroke="#8a8816" stroke-width="1.9" fill="none" />
<path d="M1145.5 310 Q1145.5 319.5 1145.5 329" stroke="#8a8816" stroke-width="1.9" fill="none" />
<path d="M1148.5 310 Q1148.5 319.5 1148.5 329" stroke="#8a8816" stroke-width="1.9" fill="none" />
<path d="M1151.5 310 Q1151.5 319.5 1151.5 329" stroke="#8a8816" stroke-width="1.9" fill="none" />
</g>
<line x1="702" y1="220.5" x2="978" y2="220.5" stroke="#8c4412" stroke-width="2" />
<line x1="721.5" y1="135" x2="721.5" y2="221" stroke="#8c4412" stroke-width="2" />
<path d="M746 129.5 L782.5 129.5 L782.5 185.5 L813 185.5 L813 221" stroke="#8c4412" stroke-width="2" fill="none" />
<path d="M976 205 L976 259.5 L1105 259.5" stroke="#8c4412" stroke-width="2" fill="none" />
<path d="M736 318 L850 318 L850 352" stroke="#8c4412" stroke-width="2" fill="none" />
<line x1="775.5" y1="300" x2="775.5" y2="318" stroke="#8c4412" stroke-width="2" />
<line x1="755.2" y1="318" x2="755.2" y2="402" stroke="#8c4412" stroke-width="2" />
<line x1="887" y1="305" x2="887" y2="352" stroke="#8c4412" stroke-width="2" />
<path d="M1012 354 L1012 308.5 L1105 308.5" stroke="#8c4412" stroke-width="2" fill="none" />
<line x1="909" y1="362" x2="909" y2="384" stroke="#8c4412" stroke-width="2" />
<ellipse cx="909" cy="383.7" rx="54" ry="23.4" fill="#0c0c0c"/>
<clipPath id="c18"><ellipse cx="909" cy="383.7" rx="54" ry="23.4"/></clipPath><g clip-path="url(#c18)">
<line x1="855.5" y1="360" x2="855.5" y2="407" stroke="#262626" stroke-width="1" />
<line x1="858.5" y1="360" x2="858.5" y2="407" stroke="#262626" stroke-width="1" />
<line x1="861.5" y1="360" x2="861.5" y2="407" stroke="#262626" stroke-width="1" />
<line x1="864.5" y1="360" x2="864.5" y2="407" stroke="#262626" stroke-width="1" />
<line x1="867.5" y1="360" x2="867.5" y2="407" stroke="#262626" stroke-width="1" />
<line x1="871.5" y1="360" x2="871.5" y2="407" stroke="#262626" stroke-width="1" />
<line x1="874.5" y1="360" x2="874.5" y2="407" stroke="#262626" stroke-width="1" />
<line x1="877.5" y1="360" x2="877.5" y2="407" stroke="#262626" stroke-width="1" />
<line x1="880.5" y1="360" x2="880.5" y2="407" stroke="#262626" stroke-width="1" />
<line x1="883.5" y1="360" x2="883.5" y2="407" stroke="#262626" stroke-width="1" />
<line x1="886.5" y1="360" x2="886.5" y2="407" stroke="#262626" stroke-width="1" />
<line x1="889.5" y1="360" x2="889.5" y2="407" stroke="#262626" stroke-width="1" />
<line x1="892.5" y1="360" x2="892.5" y2="407" stroke="#262626" stroke-width="1" />
<line x1="895.5" y1="360" x2="895.5" y2="407" stroke="#262626" stroke-width="1" />
<line x1="898.5" y1="360" x2="898.5" y2="407" stroke="#262626" stroke-width="1" />
<line x1="902.5" y1="360" x2="902.5" y2="407" stroke="#262626" stroke-width="1" />
<line x1="905.5" y1="360" x2="905.5" y2="407" stroke="#262626" stroke-width="1" />
<line x1="908.5" y1="360" x2="908.5" y2="407" stroke="#262626" stroke-width="1" />
<line x1="911.5" y1="360" x2="911.5" y2="407" stroke="#262626" stroke-width="1" />
<line x1="914.5" y1="360" x2="914.5" y2="407" stroke="#262626" stroke-width="1" />
<line x1="917.5" y1="360" x2="917.5" y2="407" stroke="#262626" stroke-width="1" />
<line x1="920.5" y1="360" x2="920.5" y2="407" stroke="#262626" stroke-width="1" />
<line x1="923.5" y1="360" x2="923.5" y2="407" stroke="#262626" stroke-width="1" />
<line x1="926.5" y1="360" x2="926.5" y2="407" stroke="#262626" stroke-width="1" />
<line x1="929.5" y1="360" x2="929.5" y2="407" stroke="#262626" stroke-width="1" />
<line x1="933.5" y1="360" x2="933.5" y2="407" stroke="#262626" stroke-width="1" />
<line x1="936.5" y1="360" x2="936.5" y2="407" stroke="#262626" stroke-width="1" />
<line x1="939.5" y1="360" x2="939.5" y2="407" stroke="#262626" stroke-width="1" />
<line x1="942.5" y1="360" x2="942.5" y2="407" stroke="#262626" stroke-width="1" />
<line x1="945.5" y1="360" x2="945.5" y2="407" stroke="#262626" stroke-width="1" />
<line x1="948.5" y1="360" x2="948.5" y2="407" stroke="#262626" stroke-width="1" />
<line x1="951.5" y1="360" x2="951.5" y2="407" stroke="#262626" stroke-width="1" />
<line x1="954.5" y1="360" x2="954.5" y2="407" stroke="#262626" stroke-width="1" />
<line x1="957.5" y1="360" x2="957.5" y2="407" stroke="#262626" stroke-width="1" />
<line x1="960.5" y1="360" x2="960.5" y2="407" stroke="#262626" stroke-width="1" />
</g>
<ellipse cx="909" cy="383.7" rx="54" ry="23.4" fill="none" stroke="#8a8816" stroke-width="1"/>
<path d="M889 362 A20 20 0 0 0 929 362" stroke="#8a8816" stroke-width="1" fill="none" />
<rect x="867" y="377" width="27" height="10" stroke="#8a8816" stroke-width="1" fill="none" />
<rect x="900" y="356" width="24" height="8" stroke="#8a8816" stroke-width="1" fill="none" />
<path d="M820 440 Q820 402 865 403 Q900 405 930 395 L1005 393 Q1034 395 1034 425 L1034 505 Q1034 525 1010 525 Q970 522 935 510 Q910 505 880 520 Q860 527 845 525 Q820 520 820 500 Z" stroke="#8a8816" stroke-width="1.1" fill="none" />
<path d="M845 410 L1030 512 M1025 405 L832 515" stroke="#8a8816" stroke-width="0.8" fill="none" />
<path d="M735 135.5 L778 135.5 L778 182.5 L818 182.5 L818 225.5 L845.5 225.5 L845.5 356.5 L1155.5 356.5 L1155.5 495 L1072.5 495 L1072.5 502" stroke="#1f80e8" stroke-width="3.5" fill="none" />
<path d="M735 135.5 L778 135.5 L778 182.5 L818 182.5 L818 225.5 L845.5 225.5 L845.5 356.5 L1155.5 356.5 L1155.5 495 L1072.5 495 L1072.5 502" stroke="#d8ecff" stroke-width="3.5" fill="none" stroke-dasharray="6 22"/>
<path d="M721 124 L721 132" stroke="#4a5a66" stroke-width="2.5"/>
<circle cx="723" cy="137" r="3.6" fill="#9a10b0"/>
<path d="M722 132 q5 0 5 4 M725 137 l4 3" stroke="#9a10b0" stroke-width="1.3" fill="none"/>
<path d="M787 127 L787 135" stroke="#4a5a66" stroke-width="2.5"/>
<circle cx="789" cy="140" r="3.6" fill="#9a10b0"/>
<path d="M788 135 q5 0 5 4 M791 140 l4 3" stroke="#9a10b0" stroke-width="1.3" fill="none"/>
<path d="M788 145 L788 153" stroke="#4a5a66" stroke-width="2.5"/>
<circle cx="790" cy="158" r="3.6" fill="#9a10b0"/>
<path d="M789 153 q5 0 5 4 M792 158 l4 3" stroke="#9a10b0" stroke-width="1.3" fill="none"/>
<path d="M976 189 L976 197" stroke="#4a5a66" stroke-width="2.5"/>
<circle cx="978" cy="202" r="3.6" fill="#9a10b0"/>
<path d="M977 197 q5 0 5 4 M980 202 l4 3" stroke="#9a10b0" stroke-width="1.3" fill="none"/>
<path d="M1106 247 L1106 255" stroke="#4a5a66" stroke-width="2.5"/>
<circle cx="1108" cy="260" r="3.6" fill="#9a10b0"/>
<path d="M1107 255 q5 0 5 4 M1110 260 l4 3" stroke="#9a10b0" stroke-width="1.3" fill="none"/>
<path d="M1106 295 L1106 303" stroke="#4a5a66" stroke-width="2.5"/>
<circle cx="1108" cy="308" r="3.6" fill="#9a10b0"/>
<path d="M1107 303 q5 0 5 4 M1110 308 l4 3" stroke="#9a10b0" stroke-width="1.3" fill="none"/>
<path d="M773 282 L773 290" stroke="#4a5a66" stroke-width="2.5"/>
<circle cx="775" cy="295" r="3.6" fill="#9a10b0"/>
<path d="M774 290 q5 0 5 4 M777 295 l4 3" stroke="#9a10b0" stroke-width="1.3" fill="none"/>
<path d="M886 287 L886 295" stroke="#4a5a66" stroke-width="2.5"/>
<circle cx="888" cy="300" r="3.6" fill="#9a10b0"/>
<path d="M887 295 q5 0 5 4 M890 300 l4 3" stroke="#9a10b0" stroke-width="1.3" fill="none"/>
<path d="M753 391 L753 399" stroke="#4a5a66" stroke-width="2.5"/>
<circle cx="755" cy="404" r="3.6" fill="#9a10b0"/>
<path d="M754 399 q5 0 5 4 M757 404 l4 3" stroke="#9a10b0" stroke-width="1.3" fill="none"/>
<path d="M908 373 L908 381" stroke="#4a5a66" stroke-width="2.5"/>
<circle cx="910" cy="386" r="3.6" fill="#9a10b0"/>
<path d="M909 381 q5 0 5 4 M912 386 l4 3" stroke="#9a10b0" stroke-width="1.3" fill="none"/>
<path d="M702 426.5 L788.5 426.5 L788.5 483.8 L1170 483.8" stroke="#ffffff" stroke-width="3" fill="none" />
<clipPath id="c19"><rect x="702" y="459" width="48" height="17"/></clipPath><g clip-path="url(#c19)">
<rect x="702" y="459" width="48" height="17" fill="#161603"/>
<path d="M705.0 457 Q705.0 467.5 705.0 478" stroke="#8a8816" stroke-width="1.9" fill="none" />
<path d="M711.0 457 Q711.0 467.5 711.0 478" stroke="#8a8816" stroke-width="1.9" fill="none" />
<path d="M717.0 457 Q717.0 467.5 717.0 478" stroke="#8a8816" stroke-width="1.9" fill="none" />
<path d="M723.0 457 Q723.0 467.5 723.0 478" stroke="#8a8816" stroke-width="1.9" fill="none" />
<path d="M729.0 457 Q729.0 467.5 729.0 478" stroke="#8a8816" stroke-width="1.9" fill="none" />
<path d="M735.0 457 Q735.0 467.5 735.0 478" stroke="#8a8816" stroke-width="1.9" fill="none" />
<path d="M741.0 457 Q741.0 467.5 741.0 478" stroke="#8a8816" stroke-width="1.9" fill="none" />
<path d="M747.0 457 Q747.0 467.5 747.0 478" stroke="#8a8816" stroke-width="1.9" fill="none" />
<path d="M753.0 457 Q753.0 467.5 753.0 478" stroke="#8a8816" stroke-width="1.9" fill="none" />
</g>
<line x1="702" y1="459.5" x2="750" y2="459.5" stroke="#8a8816" stroke-width="1.3" />
<line x1="702" y1="476.5" x2="750" y2="476.5" stroke="#8a8816" stroke-width="1.3" />
<rect x="702" y="477" width="48" height="59" stroke="#8a8816" stroke-width="1" fill="none" />
<line x1="702" y1="497" x2="750" y2="497" stroke="#8a8816" stroke-width="1" />
<line x1="702" y1="517" x2="750" y2="517" stroke="#8a8816" stroke-width="1" />
<line x1="724" y1="477" x2="724" y2="536" stroke="#8a8816" stroke-width="1" />
<line x1="702" y1="527.5" x2="750" y2="527.5" stroke="#8a8816" stroke-width="2" />
<line x1="709.5" y1="490.5" x2="712.5" y2="487.5" stroke="#8a8816" stroke-width="1" />
<line x1="735.5" y1="490.5" x2="738.5" y2="487.5" stroke="#8a8816" stroke-width="1" />
<line x1="709.5" y1="509.5" x2="712.5" y2="506.5" stroke="#8a8816" stroke-width="1" />
<line x1="735.5" y1="509.5" x2="738.5" y2="506.5" stroke="#8a8816" stroke-width="1" />
<line x1="709.5" y1="522.5" x2="712.5" y2="519.5" stroke="#8a8816" stroke-width="1" />
<line x1="735.5" y1="522.5" x2="738.5" y2="519.5" stroke="#8a8816" stroke-width="1" />
<line x1="709.5" y1="533.5" x2="712.5" y2="530.5" stroke="#8a8816" stroke-width="1" />
<line x1="735.5" y1="533.5" x2="738.5" y2="530.5" stroke="#8a8816" stroke-width="1" />
<path d="M717 495 l0 12" stroke="#8a8816" stroke-width="2" fill="none" />
<path d="M752 434 l3 3 l-3 3 l-3 -3 z" fill="#3a4650"/>
<path d="M752 457 l3 3 l-3 3 l-3 -3 z" fill="#3a4650"/>
<path d="M752 478 l3 3 l-3 3 l-3 -3 z" fill="#3a4650"/>
<path d="M752 523 l3 3 l-3 3 l-3 -3 z" fill="#3a4650"/>
<text x="762" y="494" fill="#6a6a6a" font-size="5.5" font-family="Liberation Mono">1:50 LEVEL</text>
<rect x="768" y="452" width="34" height="10" stroke="#8a8816" stroke-width="1" fill="none" />
<rect x="768" y="462" width="34" height="8" stroke="#8a8816" stroke-width="1" fill="none" />
<rect x="768" y="470" width="34" height="10" stroke="#8a8816" stroke-width="1" fill="none" />
<rect x="1070.5" y="389.5" width="24.5" height="37" stroke="#4a5866" stroke-width="1.5" fill="none" />
<rect x="1074" y="393" width="17" height="14" stroke="#8a8816" stroke-width="1" fill="none" />
<rect x="1074" y="409" width="17" height="14" stroke="#8a8816" stroke-width="1" fill="none" />
<line x1="1074" y1="393" x2="1091" y2="407" stroke="#8a8816" stroke-width="0.8" />
<line x1="1074" y1="409" x2="1091" y2="423" stroke="#8a8816" stroke-width="0.8" />
<rect x="1046" y="445" width="18" height="35" stroke="#4a5866" stroke-width="1.5" fill="none" />
<rect x="1049" y="449" width="12" height="13" stroke="#8a8816" stroke-width="1" fill="none" />
<rect x="1049" y="465" width="12" height="13" stroke="#8a8816" stroke-width="1" fill="none" />
<line x1="1049" y1="449" x2="1061" y2="462" stroke="#8a8816" stroke-width="0.8" />
<line x1="1049" y1="465" x2="1061" y2="478" stroke="#8a8816" stroke-width="0.8" />
<clipPath id="c20"><rect x="1133" y="440" width="20" height="42"/></clipPath><g clip-path="url(#c20)">
<rect x="1133" y="440" width="20" height="42" fill="#1c1c04"/>
<path d="M1135.0 438 Q1135.0 461.0 1135.0 484" stroke="#8a8816" stroke-width="1.9" fill="none" />
<path d="M1139.0 438 Q1139.0 461.0 1139.0 484" stroke="#8a8816" stroke-width="1.9" fill="none" />
<path d="M1143.0 438 Q1143.0 461.0 1143.0 484" stroke="#8a8816" stroke-width="1.9" fill="none" />
<path d="M1147.0 438 Q1147.0 461.0 1147.0 484" stroke="#8a8816" stroke-width="1.9" fill="none" />
<path d="M1151.0 438 Q1151.0 461.0 1151.0 484" stroke="#8a8816" stroke-width="1.9" fill="none" />
<path d="M1155.0 438 Q1155.0 461.0 1155.0 484" stroke="#8a8816" stroke-width="1.9" fill="none" />
<line x1="1133" y1="444" x2="1153" y2="444" stroke="#4c4c0c" stroke-width="0.9" />
<line x1="1133" y1="448.5" x2="1153" y2="448.5" stroke="#4c4c0c" stroke-width="0.9" />
<line x1="1133" y1="453.0" x2="1153" y2="453.0" stroke="#4c4c0c" stroke-width="0.9" />
<line x1="1133" y1="457.5" x2="1153" y2="457.5" stroke="#4c4c0c" stroke-width="0.9" />
<line x1="1133" y1="462.0" x2="1153" y2="462.0" stroke="#4c4c0c" stroke-width="0.9" />
<line x1="1133" y1="466.5" x2="1153" y2="466.5" stroke="#4c4c0c" stroke-width="0.9" />
<line x1="1133" y1="471.0" x2="1153" y2="471.0" stroke="#4c4c0c" stroke-width="0.9" />
<line x1="1133" y1="475.5" x2="1153" y2="475.5" stroke="#4c4c0c" stroke-width="0.9" />
<line x1="1133" y1="480.0" x2="1153" y2="480.0" stroke="#4c4c0c" stroke-width="0.9" />
</g>
<rect x="1121" y="436" width="7" height="6" stroke="#8a8816" stroke-width="0.8" fill="none" />
<rect x="1121" y="443" width="7" height="6" stroke="#8a8816" stroke-width="0.8" fill="none" />
<rect x="1121" y="450" width="7" height="6" stroke="#8a8816" stroke-width="0.8" fill="none" />
<rect x="1121" y="457" width="7" height="6" stroke="#8a8816" stroke-width="0.8" fill="none" />
<rect x="1121" y="464" width="7" height="6" stroke="#8a8816" stroke-width="0.8" fill="none" />
<rect x="1121" y="471" width="7" height="6" stroke="#8a8816" stroke-width="0.8" fill="none" />
<rect x="1105" y="415" width="22" height="12" stroke="#8a8816" stroke-width="1" fill="none" />
<line x1="1095" y1="400" x2="1150" y2="400" stroke="#8a8816" stroke-width="1" />
<path d="M1071 358 L1071 392 M1096 358 L1096 392" stroke="#8a8816" stroke-width="1" fill="none" />
<rect x="1158" y="360" width="12" height="100" stroke="#8a8816" stroke-width="1" fill="none" />
<line x1="1158" y1="370" x2="1170" y2="370" stroke="#8a8816" stroke-width="1" />
<line x1="1158" y1="382" x2="1170" y2="382" stroke="#8a8816" stroke-width="1" />
<line x1="1158" y1="394" x2="1170" y2="394" stroke="#8a8816" stroke-width="1" />
<line x1="1158" y1="406" x2="1170" y2="406" stroke="#8a8816" stroke-width="1" />
<line x1="1158" y1="418" x2="1170" y2="418" stroke="#8a8816" stroke-width="1" />
<line x1="1158" y1="430" x2="1170" y2="430" stroke="#8a8816" stroke-width="1" />
<line x1="1158" y1="442" x2="1170" y2="442" stroke="#8a8816" stroke-width="1" />
<line x1="1158" y1="454" x2="1170" y2="454" stroke="#8a8816" stroke-width="1" />
<path d="M750 477 L750 540 Q750 564 772 564 L1040 564" stroke="#8a8816" stroke-width="1" fill="none" />
<rect x="776" y="537" width="43" height="27" stroke="#8a8816" stroke-width="1" fill="none" />
<clipPath id="c21"><rect x="787" y="538" width="18" height="25"/></clipPath><g clip-path="url(#c21)">
<rect x="787" y="538" width="18" height="25" fill="#242404"/>
<path d="M788.5 536 Q788.5 550.5 788.5 565" stroke="#8a8816" stroke-width="1.9" fill="none" />
<path d="M791.5 536 Q791.5 550.5 791.5 565" stroke="#8a8816" stroke-width="1.9" fill="none" />
<path d="M794.5 536 Q794.5 550.5 794.5 565" stroke="#8a8816" stroke-width="1.9" fill="none" />
<path d="M797.5 536 Q797.5 550.5 797.5 565" stroke="#8a8816" stroke-width="1.9" fill="none" />
<path d="M800.5 536 Q800.5 550.5 800.5 565" stroke="#8a8816" stroke-width="1.9" fill="none" />
<path d="M803.5 536 Q803.5 550.5 803.5 565" stroke="#8a8816" stroke-width="1.9" fill="none" />
<path d="M806.5 536 Q806.5 550.5 806.5 565" stroke="#8a8816" stroke-width="1.9" fill="none" />
<line x1="787" y1="542" x2="805" y2="542" stroke="#4c4c0c" stroke-width="0.9" />
<line x1="787" y1="546.5" x2="805" y2="546.5" stroke="#4c4c0c" stroke-width="0.9" />
<line x1="787" y1="551.0" x2="805" y2="551.0" stroke="#4c4c0c" stroke-width="0.9" />
<line x1="787" y1="555.5" x2="805" y2="555.5" stroke="#4c4c0c" stroke-width="0.9" />
<line x1="787" y1="560.0" x2="805" y2="560.0" stroke="#4c4c0c" stroke-width="0.9" />
</g>
<ellipse cx="1067" cy="535" rx="22" ry="29" fill="none" stroke="#8a8816" stroke-width="1"/>
<clipPath id="c22"><rect x="1047" y="527" width="43" height="18"/></clipPath><g clip-path="url(#c22)">
<rect x="1047" y="527" width="43" height="18" fill="#262604"/>
<path d="M1049.0 525 Q1049.0 536.0 1049.0 547" stroke="#8a8816" stroke-width="1.9" fill="none" />
<path d="M1053.0 525 Q1053.0 536.0 1053.0 547" stroke="#8a8816" stroke-width="1.9" fill="none" />
<path d="M1057.0 525 Q1057.0 536.0 1057.0 547" stroke="#8a8816" stroke-width="1.9" fill="none" />
<path d="M1061.0 525 Q1061.0 536.0 1061.0 547" stroke="#8a8816" stroke-width="1.9" fill="none" />
<path d="M1065.0 525 Q1065.0 536.0 1065.0 547" stroke="#8a8816" stroke-width="1.9" fill="none" />
<path d="M1069.0 525 Q1069.0 536.0 1069.0 547" stroke="#8a8816" stroke-width="1.9" fill="none" />
<path d="M1073.0 525 Q1073.0 536.0 1073.0 547" stroke="#8a8816" stroke-width="1.9" fill="none" />
<path d="M1077.0 525 Q1077.0 536.0 1077.0 547" stroke="#8a8816" stroke-width="1.9" fill="none" />
<path d="M1081.0 525 Q1081.0 536.0 1081.0 547" stroke="#8a8816" stroke-width="1.9" fill="none" />
<path d="M1085.0 525 Q1085.0 536.0 1085.0 547" stroke="#8a8816" stroke-width="1.9" fill="none" />
<path d="M1089.0 525 Q1089.0 536.0 1089.0 547" stroke="#8a8816" stroke-width="1.9" fill="none" />
<path d="M1093.0 525 Q1093.0 536.0 1093.0 547" stroke="#8a8816" stroke-width="1.9" fill="none" />
<line x1="1047" y1="531" x2="1090" y2="531" stroke="#4c4c0c" stroke-width="0.9" />
<line x1="1047" y1="535.5" x2="1090" y2="535.5" stroke="#4c4c0c" stroke-width="0.9" />
<line x1="1047" y1="540.0" x2="1090" y2="540.0" stroke="#4c4c0c" stroke-width="0.9" />
<line x1="1047" y1="544.5" x2="1090" y2="544.5" stroke="#4c4c0c" stroke-width="0.9" />
</g>
<rect x="1090" y="502" width="8" height="62" stroke="#8a8816" stroke-width="1" fill="none" />
<path d="M1098 502 L1155 502 L1155 564 L1170 564" stroke="#8a8816" stroke-width="1" fill="none" />
<line x1="702" y1="564.5" x2="1170" y2="564.5" stroke="#7a7a7a" stroke-width="1.2" stroke-dasharray="5 4"/>
<line x1="301" y1="629.5" x2="1170" y2="629.5" stroke="#857878" stroke-width="1.5" stroke-dasharray="7 5"/>
<text x="921" y="573" fill="#56626c" font-size="7" font-family="Liberation Mono">SETBACK LINE 12200mm (40')</text>
<text x="904" y="638" fill="#56626c" font-size="7" font-family="Liberation Mono">BOUNDARY LINE 192'5'0"  367.8mm</text>
</svg>
<div class="abs" style="left:1px;top:45px;width:701px;height:577px;background:#fff;border-radius:8px;box-shadow:0 0 2px rgba(0,0,0,.4)"></div>
<div class="t" style="left:12.8px;top:58.3px;font-size:16.4px;line-height:16.4px;color:#555555;font-weight:normal;font-family:'Liberation Sans',sans-serif;">View Quantity by Category</div>
<svg class="abs" style="left:640px;top:54px" width="54" height="24" viewBox="640 54 54 24"><rect x="646" y="60" width="10" height="10" rx="2" fill="none" stroke="#8a8a8a" stroke-width="1.6"/><path d="M676.5 60.5 L687 71 M687 60.5 L676.5 71" stroke="#7a7a7a" stroke-width="1.4"/></svg>
<div class="t" style="left:20.7px;top:104.2px;font-size:13.7px;line-height:13.7px;color:#555;font-weight:normal;font-family:'Liberation Sans',sans-serif;">Element Type</div>
<div class="abs" style="left:119px;top:96.5px;width:282px;height:27.5px;border:1px solid #dedede;border-right:none;border-radius:3px 0 0 3px"></div>
<div class="abs" style="left:262.5px;top:97px;width:1.0px;height:26px;background:#e4e4e4"></div>
<div class="abs" style="left:259px;top:110px;width:2px;height:1.2000000000000028px;background:#999"></div>
<div class="t" style="left:123.2px;top:104.2px;font-size:13.7px;line-height:13.7px;color:#444;font-weight:normal;font-family:'Liberation Sans',sans-serif;">Electrical</div>
<div class="t" style="left:266.3px;top:104.2px;font-size:13.7px;line-height:13.7px;color:#444;font-weight:normal;font-family:'Liberation Sans',sans-serif;">Cable Tray(Elec)</div>
<div class="abs" style="left:20px;top:131px;width:22px;height:179px;background:#ececec"></div>
<div class="abs" style="left:20px;top:150.5px;width:22px;height:1.0px;background:#d4d4d4"></div>
<div class="abs" style="left:20px;top:171.5px;width:22px;height:1.0px;background:#d4d4d4"></div>
<div class="abs" style="left:20px;top:194.5px;width:22px;height:1.0px;background:#d4d4d4"></div>
<div class="abs" style="left:20px;top:217.5px;width:22px;height:1.0px;background:#d4d4d4"></div>
<div class="abs" style="left:20px;top:240.5px;width:22px;height:1.0px;background:#d4d4d4"></div>
<div class="abs" style="left:20px;top:263.5px;width:22px;height:1.0px;background:#d4d4d4"></div>
<div class="abs" style="left:20px;top:286.5px;width:22px;height:1.0px;background:#d4d4d4"></div>
<div class="abs" style="left:20px;top:309.5px;width:22px;height:1.0px;background:#d4d4d4"></div>
<div class="abs" style="left:20px;top:131px;width:1px;height:179px;background:#d0d0d0"></div>
<div class="abs" style="left:20px;top:218px;width:22px;height:23px;background:#8cc0f2"></div>
<div class="t" style="left:20px;width:22px;text-align:center;top:178.1px;font-size:13.5px;line-height:13.5px;color:#555;font-weight:normal;font-family:'Liberation Sans',sans-serif;overflow:hidden;">1</div>
<div class="t" style="left:20px;width:22px;text-align:center;top:201.1px;font-size:13.5px;line-height:13.5px;color:#555;font-weight:normal;font-family:'Liberation Sans',sans-serif;overflow:hidden;">2</div>
<div class="t" style="left:20px;width:22px;text-align:center;top:224.1px;font-size:13.5px;line-height:13.5px;color:#fff;font-weight:normal;font-family:'Liberation Sans',sans-serif;overflow:hidden;">3</div>
<div class="t" style="left:20px;width:22px;text-align:center;top:247.1px;font-size:13.5px;line-height:13.5px;color:#555;font-weight:normal;font-family:'Liberation Sans',sans-serif;overflow:hidden;">4</div>
<div class="t" style="left:20px;width:22px;text-align:center;top:270.1px;font-size:13.5px;line-height:13.5px;color:#555;font-weight:normal;font-family:'Liberation Sans',sans-serif;overflow:hidden;">5</div>
<div class="t" style="left:20px;width:22px;text-align:center;top:293.1px;font-size:13.5px;line-height:13.5px;color:#555;font-weight:normal;font-family:'Liberation Sans',sans-serif;overflow:hidden;">6</div>
<div class="abs" style="left:42px;top:131px;width:349px;height:41px;background:#a6cbf1"></div>
<div class="abs" style="left:42px;top:287px;width:349px;height:23px;background:#7ffefb"></div>
<div class="abs" style="left:42px;top:130.5px;width:349px;height:2.0px;background:#3c434a"></div>
<div class="abs" style="left:42px;top:150.5px;width:349px;height:1.0px;background:#3c434a"></div>
<div class="abs" style="left:42px;top:171px;width:349px;height:2px;background:#3c434a"></div>
<div class="abs" style="left:151px;top:194.5px;width:240px;height:1.0px;background:#3c434a"></div>
<div class="abs" style="left:151px;top:217.5px;width:240px;height:1.0px;background:#3c434a"></div>
<div class="abs" style="left:151px;top:240.5px;width:240px;height:1.0px;background:#3c434a"></div>
<div class="abs" style="left:151px;top:263.5px;width:240px;height:1.0px;background:#3c434a"></div>
<div class="abs" style="left:42px;top:286.5px;width:349px;height:1.0px;background:#3c434a"></div>
<div class="abs" style="left:42px;top:309px;width:349px;height:2px;background:#3c434a"></div>
<div class="abs" style="left:261.5px;top:131px;width:1.5px;height:180px;background:#3c434a"></div>
<div class="abs" style="left:150.5px;top:151px;width:1.5px;height:136px;background:#3c434a"></div>
<div class="t" style="left:42px;width:220px;text-align:center;top:132.8px;font-size:14px;line-height:14px;color:#111;font-weight:normal;font-family:'Liberation Serif',serif;overflow:hidden;transform:scaleX(0.92);">Classification Condition</div>
<div class="t" style="left:42px;width:109px;text-align:center;top:153.5px;font-size:14px;line-height:14px;color:#111;font-weight:normal;font-family:'Liberation Serif',serif;overflow:hidden;transform:scaleX(0.92);">Name</div>
<div class="t" style="left:151px;width:111px;text-align:center;top:153.5px;font-size:14px;line-height:14px;color:#111;font-weight:normal;font-family:'Liberation Serif',serif;overflow:hidden;transform:scaleX(0.92);">Floor</div>
<div class="abs" style="left:263px;top:151px;width:128px;height:21px;overflow:hidden"><div class="t" style="left:53.0px;top:3.1px;font-size:14px;line-height:14px;color:#111;font-weight:normal;font-family:'Liberation Serif',serif;transform:scaleX(0.92);transform-origin:0 0;">Total Length of Cable Tray</div></div>
<div class="t" style="left:151px;width:111px;text-align:center;top:175.0px;font-size:14.6px;line-height:14.6px;color:#111;font-weight:normal;font-family:'Liberation Serif',serif;overflow:hidden;transform:scaleX(0.87);">L5-CP5</div>
<div class="t" style="left:151px;width:111px;text-align:center;top:198.0px;font-size:14.6px;line-height:14.6px;color:#111;font-weight:normal;font-family:'Liberation Serif',serif;overflow:hidden;transform:scaleX(0.87);">L4-CP4</div>
<div class="t" style="left:151px;width:111px;text-align:center;top:221.0px;font-size:14.6px;line-height:14.6px;color:#111;font-weight:normal;font-family:'Liberation Serif',serif;overflow:hidden;transform:scaleX(0.87);">L2-CP2</div>
<div class="t" style="left:151px;width:111px;text-align:center;top:244.0px;font-size:14.6px;line-height:14.6px;color:#111;font-weight:normal;font-family:'Liberation Serif',serif;overflow:hidden;transform:scaleX(0.87);">GF</div>
<div class="t" style="left:151px;width:111px;text-align:center;top:267.0px;font-size:14.6px;line-height:14.6px;color:#111;font-weight:normal;font-family:'Liberation Serif',serif;overflow:hidden;transform:scaleX(0.87);">LG</div>
<div class="t" style="left:42px;width:109px;text-align:center;top:221.0px;font-size:14.6px;line-height:14.6px;color:#111;font-weight:normal;font-family:'Liberation Serif',serif;overflow:hidden;transform:scaleX(0.87);">33KV</div>
<div class="t" style="left:42px;width:220px;text-align:center;top:291.5px;font-size:14px;line-height:14px;color:#111;font-weight:normal;font-family:'Liberation Serif',serif;overflow:hidden;transform:scaleX(0.95);">Total</div>
<div class="abs" style="left:401.5px;top:277px;width:4.5px;height:55px;background:#7cc36a;border-radius:1px"></div>
<div class="abs" style="left:401.5px;top:334px;width:4.5px;height:52px;background:#7cc36a;border-radius:1px"></div>
<div class="abs" style="left:35px;top:556px;width:136px;height:8px;background:#c8c8c8;border-radius:4px"></div>
<div class="t" style="left:417.2px;top:98.7px;font-size:13.6px;line-height:13.6px;color:#444;font-weight:normal;font-family:'Liberation Sans',sans-serif;">Reversely-Check Entity(10)</div>
<div class="abs" style="left:416.5px;top:121.5px;width:264.5px;height:445.5px;border:1px solid #d9d9d9"></div>
<div class="abs" style="left:417.5px;top:122.5px;width:27.5px;height:22.5px;background:#efefef"></div>
<div class="abs" style="left:445px;top:122.5px;width:220px;height:22.5px;background:#7db7f3"></div>
<div class="abs" style="left:554.5px;top:122.5px;width:1.0px;height:22.5px;background:#6aa6e3"></div>
<div class="t" style="left:445px;width:110px;text-align:center;top:127.6px;font-size:14px;line-height:14px;color:#fff;font-weight:bold;font-family:'Liberation Sans',sans-serif;overflow:hidden;">Entity Name</div>
<div class="t" style="left:555px;width:110px;text-align:center;top:127.6px;font-size:14px;line-height:14px;color:#fff;font-weight:bold;font-family:'Liberation Sans',sans-serif;overflow:hidden;">Entity ID</div>
<div class="abs" style="left:417.5px;top:145px;width:27.5px;height:283px;background:#7db7f3"></div>
<div class="abs" style="left:445px;top:145px;width:220px;height:283px;background:#d6e9fc"></div>
<div class="t" style="left:417px;width:28px;text-align:center;top:152.6px;font-size:13.5px;line-height:13.5px;color:#fff;font-weight:bold;font-family:'Liberation Sans',sans-serif;overflow:hidden;">1</div>
<div class="t" style="left:448.5px;top:152.5px;font-size:13.6px;line-height:13.6px;color:#333;font-weight:normal;font-family:'Liberation Sans',sans-serif;">33KV</div>
<div class="t" style="left:558.5px;top:152.5px;font-size:13.6px;line-height:13.6px;color:#333;font-weight:normal;font-family:'Liberation Sans',sans-serif;">339</div>
<div class="abs" style="left:445px;top:172.85px;width:220px;height:1.0px;background:#c4d4e2"></div>
<div class="abs" style="left:417.5px;top:172.85px;width:27.5px;height:1.0px;background:#6faae6"></div>
<div class="t" style="left:417px;width:28px;text-align:center;top:180.9px;font-size:13.5px;line-height:13.5px;color:#fff;font-weight:bold;font-family:'Liberation Sans',sans-serif;overflow:hidden;">2</div>
<div class="t" style="left:448.5px;top:180.8px;font-size:13.6px;line-height:13.6px;color:#333;font-weight:normal;font-family:'Liberation Sans',sans-serif;">33KV</div>
<div class="t" style="left:558.5px;top:180.8px;font-size:13.6px;line-height:13.6px;color:#333;font-weight:normal;font-family:'Liberation Sans',sans-serif;">340</div>
<div class="abs" style="left:445px;top:201.2px;width:220px;height:1.0px;background:#c4d4e2"></div>
<div class="abs" style="left:417.5px;top:201.2px;width:27.5px;height:1.0px;background:#6faae6"></div>
<div class="t" style="left:417px;width:28px;text-align:center;top:209.3px;font-size:13.5px;line-height:13.5px;color:#fff;font-weight:bold;font-family:'Liberation Sans',sans-serif;overflow:hidden;">3</div>
<div class="t" style="left:448.5px;top:209.2px;font-size:13.6px;line-height:13.6px;color:#333;font-weight:normal;font-family:'Liberation Sans',sans-serif;">33KV</div>
<div class="t" style="left:558.5px;top:209.2px;font-size:13.6px;line-height:13.6px;color:#333;font-weight:normal;font-family:'Liberation Sans',sans-serif;">342</div>
<div class="abs" style="left:445px;top:229.55px;width:220px;height:1.0px;background:#c4d4e2"></div>
<div class="abs" style="left:417.5px;top:229.55px;width:27.5px;height:1.0px;background:#6faae6"></div>
<div class="t" style="left:417px;width:28px;text-align:center;top:237.6px;font-size:13.5px;line-height:13.5px;color:#fff;font-weight:bold;font-family:'Liberation Sans',sans-serif;overflow:hidden;">4</div>
<div class="t" style="left:448.5px;top:237.5px;font-size:13.6px;line-height:13.6px;color:#333;font-weight:normal;font-family:'Liberation Sans',sans-serif;">33KV</div>
<div class="t" style="left:558.5px;top:237.5px;font-size:13.6px;line-height:13.6px;color:#333;font-weight:normal;font-family:'Liberation Sans',sans-serif;">344</div>
<div class="abs" style="left:445px;top:257.9px;width:220px;height:1.0px;background:#c4d4e2"></div>
<div class="abs" style="left:417.5px;top:257.9px;width:27.5px;height:1.0px;background:#6faae6"></div>
<div class="t" style="left:417px;width:28px;text-align:center;top:266.0px;font-size:13.5px;line-height:13.5px;color:#fff;font-weight:bold;font-family:'Liberation Sans',sans-serif;overflow:hidden;">5</div>
<div class="t" style="left:448.5px;top:265.9px;font-size:13.6px;line-height:13.6px;color:#333;font-weight:normal;font-family:'Liberation Sans',sans-serif;">33KV</div>
<div class="t" style="left:558.5px;top:265.9px;font-size:13.6px;line-height:13.6px;color:#333;font-weight:normal;font-family:'Liberation Sans',sans-serif;">350</div>
<div class="abs" style="left:445px;top:286.25px;width:220px;height:1.0px;background:#c4d4e2"></div>
<div class="abs" style="left:417.5px;top:286.25px;width:27.5px;height:1.0px;background:#6faae6"></div>
<div class="t" style="left:417px;width:28px;text-align:center;top:294.3px;font-size:13.5px;line-height:13.5px;color:#fff;font-weight:bold;font-family:'Liberation Sans',sans-serif;overflow:hidden;">6</div>
<div class="t" style="left:448.5px;top:294.2px;font-size:13.6px;line-height:13.6px;color:#333;font-weight:normal;font-family:'Liberation Sans',sans-serif;">33KV</div>
<div class="t" style="left:558.5px;top:294.2px;font-size:13.6px;line-height:13.6px;color:#333;font-weight:normal;font-family:'Liberation Sans',sans-serif;">352</div>
<div class="abs" style="left:445px;top:314.6px;width:220px;height:1.0px;background:#c4d4e2"></div>
<div class="abs" style="left:417.5px;top:314.6px;width:27.5px;height:1.0px;background:#6faae6"></div>
<div class="t" style="left:417px;width:28px;text-align:center;top:322.7px;font-size:13.5px;line-height:13.5px;color:#fff;font-weight:bold;font-family:'Liberation Sans',sans-serif;overflow:hidden;">7</div>
<div class="t" style="left:448.5px;top:322.6px;font-size:13.6px;line-height:13.6px;color:#333;font-weight:normal;font-family:'Liberation Sans',sans-serif;">33KV</div>
<div class="t" style="left:558.5px;top:322.6px;font-size:13.6px;line-height:13.6px;color:#333;font-weight:normal;font-family:'Liberation Sans',sans-serif;">354</div>
<div class="abs" style="left:445px;top:342.95000000000005px;width:220px;height:1.0px;background:#c4d4e2"></div>
<div class="abs" style="left:417.5px;top:342.95000000000005px;width:27.5px;height:1.0px;background:#6faae6"></div>
<div class="t" style="left:417px;width:28px;text-align:center;top:351.0px;font-size:13.5px;line-height:13.5px;color:#fff;font-weight:bold;font-family:'Liberation Sans',sans-serif;overflow:hidden;">8</div>
<div class="t" style="left:448.5px;top:350.9px;font-size:13.6px;line-height:13.6px;color:#333;font-weight:normal;font-family:'Liberation Sans',sans-serif;">33KV</div>
<div class="t" style="left:558.5px;top:350.9px;font-size:13.6px;line-height:13.6px;color:#333;font-weight:normal;font-family:'Liberation Sans',sans-serif;">356</div>
<div class="abs" style="left:445px;top:371.3px;width:220px;height:1.0px;background:#c4d4e2"></div>
<div class="abs" style="left:417.5px;top:371.3px;width:27.5px;height:1.0px;background:#6faae6"></div>
<div class="t" style="left:417px;width:28px;text-align:center;top:379.4px;font-size:13.5px;line-height:13.5px;color:#fff;font-weight:bold;font-family:'Liberation Sans',sans-serif;overflow:hidden;">9</div>
<div class="t" style="left:448.5px;top:379.3px;font-size:13.6px;line-height:13.6px;color:#333;font-weight:normal;font-family:'Liberation Sans',sans-serif;">33KV</div>
<div class="t" style="left:558.5px;top:379.3px;font-size:13.6px;line-height:13.6px;color:#333;font-weight:normal;font-family:'Liberation Sans',sans-serif;">358</div>
<div class="abs" style="left:445px;top:399.65px;width:220px;height:1.0px;background:#c4d4e2"></div>
<div class="abs" style="left:417.5px;top:399.65px;width:27.5px;height:1.0px;background:#6faae6"></div>
<div class="t" style="left:417px;width:28px;text-align:center;top:407.7px;font-size:13.5px;line-height:13.5px;color:#fff;font-weight:bold;font-family:'Liberation Sans',sans-serif;overflow:hidden;">10</div>
<div class="t" style="left:448.5px;top:407.6px;font-size:13.6px;line-height:13.6px;color:#333;font-weight:normal;font-family:'Liberation Sans',sans-serif;">33KV</div>
<div class="t" style="left:558.5px;top:407.6px;font-size:13.6px;line-height:13.6px;color:#333;font-weight:normal;font-family:'Liberation Sans',sans-serif;">360</div>
<div class="abs" style="left:554.5px;top:145px;width:1.0px;height:283px;background:#c4d4e2"></div>
<div class="abs" style="left:664.5px;top:122.5px;width:1.5px;height:306.0px;background:#8a9298"></div>
<div class="abs" style="left:417.5px;top:427px;width:248.5px;height:1.5px;background:#8a9298"></div>
<div class="abs" style="left:10.5px;top:584.5px;width:87.0px;height:28px;border:1px solid #dcdcdc;border-radius:4px;background:#fff"></div>
<div class="abs" style="left:18px;top:586px;width:71px;height:25px;overflow:hidden"><div class="t" style="left:0.5px;top:7.2px;font-size:13.4px;line-height:13.4px;color:#3a3a3a;font-weight:normal;font-family:'Liberation Sans',sans-serif;">Element Range</div></div>
<div class="abs" style="left:104.5px;top:584.5px;width:158.0px;height:28px;border:1px solid #dcdcdc;border-radius:4px;background:#fff"></div>
<div class="abs" style="left:112px;top:586px;width:142px;height:25px;overflow:hidden"><div class="t" style="left:-2.5px;top:6.6px;font-size:14px;line-height:14px;color:#3a3a3a;font-weight:normal;font-family:'Liberation Sans',sans-serif;">Classification and Quantity</div></div>
<div class="abs" style="left:269.5px;top:584.5px;width:87.0px;height:28px;border:1px solid #dcdcdc;border-radius:4px;background:#fff"></div>
<div class="abs" style="left:278px;top:586px;width:69px;height:25px;overflow:hidden"><div class="t" style="left:-15.3px;top:6.6px;font-size:14px;line-height:14px;color:#3a3a3a;font-weight:normal;font-family:'Liberation Sans',sans-serif;">Export to Excel</div></div>
<div class="abs" style="left:364.5px;top:584.5px;width:114.0px;height:28px;border:1px solid #dcdcdc;border-radius:4px;background:#fff"></div>
<div class="abs" style="left:370px;top:586px;width:100px;height:25px;overflow:hidden"><div class="t" style="left:-23.0px;top:6.6px;font-size:14px;line-height:14px;color:#3a3a3a;font-weight:normal;font-family:'Liberation Sans',sans-serif;">Export to Existing Excel</div></div>
<div class="abs" style="left:487px;top:590px;width:15px;height:15px;border:1.3px solid #777;border-radius:2px"></div>
<div class="t" style="left:506.0px;top:591.6px;font-size:14px;line-height:14px;color:#505050;font-weight:normal;font-family:'Liberation Sans',sans-serif;">Show Subtotal</div>
<div class="abs" style="left:604px;top:584.5px;width:87.5px;height:28.0px;background:#2b7ddf;border-radius:4px"></div>
<div class="t" style="left:637.3px;top:592.4px;font-size:14px;line-height:14px;color:#fff;font-weight:normal;font-family:'Liberation Sans',sans-serif;">Exit</div>
<div class="abs" style="left:696px;top:612px;width:2px;height:2px;background:#666"></div>
<div class="abs" style="left:693px;top:615px;width:2px;height:2px;background:#666"></div>
<div class="abs" style="left:696px;top:615px;width:2px;height:2px;background:#666"></div>
<div class="abs" style="left:690px;top:618px;width:2px;height:2px;background:#666"></div>
<div class="abs" style="left:693px;top:618px;width:2px;height:2px;background:#666"></div>
<div class="abs" style="left:696px;top:618px;width:2px;height:2px;background:#666"></div>
</body></html>
